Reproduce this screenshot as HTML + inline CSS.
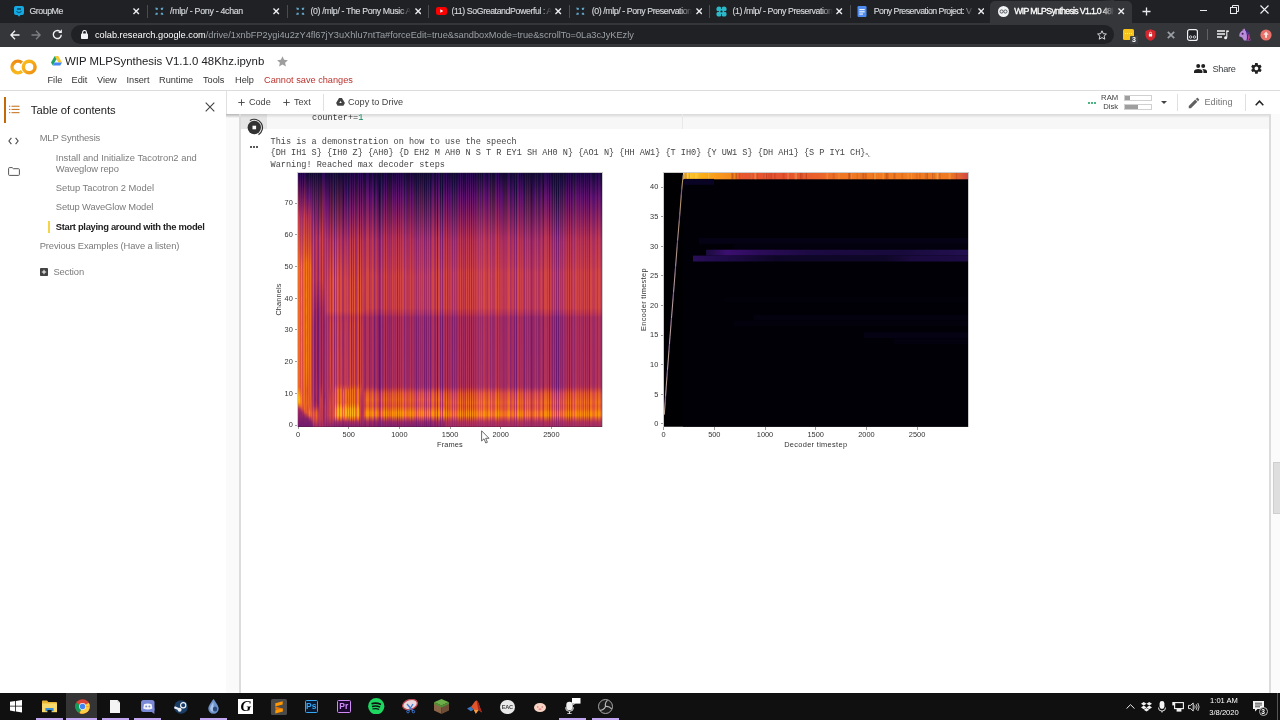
<!DOCTYPE html>
<html><head><meta charset="utf-8"><title>WIP MLPSynthesis</title>
<style>
*{box-sizing:border-box;margin:0;padding:0}
html,body{width:1280px;height:720px;overflow:hidden;background:#fff;font-family:"Liberation Sans",sans-serif;}
body{position:relative;transform:translateZ(0);will-change:transform}
.abs{position:absolute}
#tabbar{position:absolute;left:0;top:0;width:1280px;height:22.5px;background:#202124}
#toolbar{position:absolute;left:0;top:22.5px;width:1280px;height:24.2px;background:#35363a}
.ttl{top:0;height:22px;line-height:22px;font-size:9.3px;white-space:nowrap;overflow:hidden}
#omni{position:absolute;left:71px;top:25px;width:1043px;height:19px;border-radius:9.5px;background:#202124}
#url{position:absolute;left:95px;top:22.5px;height:24px;line-height:24px;font-size:9.235px;color:#9aa0a6;white-space:nowrap}
#url b{color:#fff;font-weight:normal}
#taskbar{position:absolute;left:0;top:693px;width:1280px;height:27px;background:#101010}
.mono{font-family:"Liberation Mono",monospace}
.menu{top:72.5px;height:14px;line-height:14px;font-size:9.2px;color:#333;white-space:nowrap}
.toc{height:14px;line-height:14px;font-size:9.4px;white-space:nowrap}
.tb{top:95px;height:14px;line-height:14px;font-size:9.1px;color:#424242;white-space:nowrap}
.out{height:11.5px;line-height:11.5px;font-size:8.55px;color:#454545;white-space:pre}
.tick{height:9px;line-height:9px;font-size:7.4px;color:#333;white-space:nowrap}
</style></head><body>
<div id="tabbar"></div><div id="toolbar"></div>
<div class="abs" style="left:990px;top:1px;width:142px;height:22px;background:#35363a;border-radius:5px 5px 0 0"></div>
<div class="abs ttl" style="left:29.4px;width:100px;color:#d4d7db;font-weight:normal;font-size:8.8px;letter-spacing:-0.455px;-webkit-text-stroke:0.15px #d4d7db;">GroupMe<span style="position:absolute;right:0;top:0;width:12px;height:22px;background:linear-gradient(90deg,transparent,#202124)"></span></div>
<svg class="abs" style="left:133.3px;top:8.3px" width="6.4" height="6.4" viewBox="0 0 7 7"><path d="M0.5 0.5L6.5 6.5M6.5 0.5L0.5 6.5" stroke="#eceef1" stroke-width="1.5" fill="none"/></svg>
<div class="abs" style="left:146.5px;top:5px;width:1px;height:13px;background:#4a4c50"></div>
<svg class="abs" style="left:14px;top:6px" width="10" height="11" viewBox="0 0 10 11"><rect x="0" y="0" width="10" height="9" rx="2" fill="#15a9e2"/><path d="M3.5 9L5 10.8L6.5 9Z" fill="#15a9e2"/><rect x="3" y="2" width="4" height="2" fill="#0a5f86"/><path d="M2.5 5.2Q5 8 7.5 5.2" stroke="#0a5f86" stroke-width="1.1" fill="none"/></svg>
<div class="abs ttl" style="left:170px;width:100px;color:#d4d7db;font-weight:normal;font-size:8.8px;letter-spacing:-0.287px;-webkit-text-stroke:0.15px #d4d7db;">/mlp/ - Pony - 4chan<span style="position:absolute;right:0;top:0;width:12px;height:22px;background:linear-gradient(90deg,transparent,#202124)"></span></div>
<svg class="abs" style="left:273.3px;top:8.3px" width="6.4" height="6.4" viewBox="0 0 7 7"><path d="M0.5 0.5L6.5 6.5M6.5 0.5L0.5 6.5" stroke="#eceef1" stroke-width="1.5" fill="none"/></svg>
<div class="abs" style="left:286.5px;top:5px;width:1px;height:13px;background:#4a4c50"></div>
<svg class="abs" style="left:155.3px;top:7.2px" width="8.6" height="8.6" viewBox="0 0 10 10"><g fill="#5fa8cc"><path d="M0.300 0.600L3.400 1.200L3 3.400L0.900 3.200Z"/><path d="M9.700 0.600L6.600 1.200L7 3.400L9.100 3.200Z"/><path d="M0.300 9.400L3.400 8.800L3 6.600L0.900 6.800Z"/><path d="M9.700 9.400L6.600 8.800L7 6.600L9.100 6.800Z"/></g></svg>
<div class="abs ttl" style="left:310.5px;width:100px;color:#d4d7db;font-weight:normal;font-size:8.8px;letter-spacing:-0.366px;-webkit-text-stroke:0.15px #d4d7db;">(0) /mlp/ - The Pony Music A<span style="position:absolute;right:0;top:0;width:12px;height:22px;background:linear-gradient(90deg,transparent,#202124)"></span></div>
<svg class="abs" style="left:414.8px;top:8.3px" width="6.4" height="6.4" viewBox="0 0 7 7"><path d="M0.5 0.5L6.5 6.5M6.5 0.5L0.5 6.5" stroke="#eceef1" stroke-width="1.5" fill="none"/></svg>
<div class="abs" style="left:428.0px;top:5px;width:1px;height:13px;background:#4a4c50"></div>
<svg class="abs" style="left:296.3px;top:7.2px" width="8.6" height="8.6" viewBox="0 0 10 10"><g fill="#5fa8cc"><path d="M0.300 0.600L3.400 1.200L3 3.400L0.900 3.200Z"/><path d="M9.700 0.600L6.600 1.200L7 3.400L9.100 3.200Z"/><path d="M0.300 9.400L3.400 8.800L3 6.600L0.900 6.800Z"/><path d="M9.700 9.400L6.600 8.800L7 6.600L9.100 6.800Z"/></g></svg>
<div class="abs ttl" style="left:451.5px;width:100px;color:#d4d7db;font-weight:normal;font-size:8.8px;letter-spacing:-0.421px;-webkit-text-stroke:0.15px #d4d7db;">(11) SoGreatandPowerful : A<span style="position:absolute;right:0;top:0;width:12px;height:22px;background:linear-gradient(90deg,transparent,#202124)"></span></div>
<svg class="abs" style="left:555.3px;top:8.3px" width="6.4" height="6.4" viewBox="0 0 7 7"><path d="M0.5 0.5L6.5 6.5M6.5 0.5L0.5 6.5" stroke="#eceef1" stroke-width="1.5" fill="none"/></svg>
<div class="abs" style="left:568.5px;top:5px;width:1px;height:13px;background:#4a4c50"></div>
<svg class="abs" style="left:435.5px;top:7px" width="11" height="8" viewBox="0 0 11 8"><rect width="11" height="8" rx="2.2" fill="#f00"/><path d="M4.3 2.2L7.3 4L4.3 5.8Z" fill="#fff"/></svg>
<div class="abs ttl" style="left:591.7px;width:100px;color:#d4d7db;font-weight:normal;font-size:8.8px;letter-spacing:-0.414px;-webkit-text-stroke:0.15px #d4d7db;">(0) /mlp/ - Pony Preservation<span style="position:absolute;right:0;top:0;width:12px;height:22px;background:linear-gradient(90deg,transparent,#202124)"></span></div>
<svg class="abs" style="left:696.0px;top:8.3px" width="6.4" height="6.4" viewBox="0 0 7 7"><path d="M0.5 0.5L6.5 6.5M6.5 0.5L0.5 6.5" stroke="#eceef1" stroke-width="1.5" fill="none"/></svg>
<div class="abs" style="left:709.2px;top:5px;width:1px;height:13px;background:#4a4c50"></div>
<svg class="abs" style="left:576.3px;top:7.2px" width="8.6" height="8.6" viewBox="0 0 10 10"><g fill="#5fa8cc"><path d="M0.300 0.600L3.400 1.200L3 3.400L0.900 3.200Z"/><path d="M9.700 0.600L6.600 1.200L7 3.400L9.100 3.200Z"/><path d="M0.300 9.400L3.400 8.800L3 6.600L0.900 6.800Z"/><path d="M9.700 9.400L6.600 8.800L7 6.600L9.100 6.800Z"/></g></svg>
<div class="abs ttl" style="left:732.5px;width:100px;color:#d4d7db;font-weight:normal;font-size:8.8px;letter-spacing:-0.414px;-webkit-text-stroke:0.15px #d4d7db;">(1) /mlp/ - Pony Preservation<span style="position:absolute;right:0;top:0;width:12px;height:22px;background:linear-gradient(90deg,transparent,#202124)"></span></div>
<svg class="abs" style="left:836.3px;top:8.3px" width="6.4" height="6.4" viewBox="0 0 7 7"><path d="M0.5 0.5L6.5 6.5M6.5 0.5L0.5 6.5" stroke="#eceef1" stroke-width="1.5" fill="none"/></svg>
<div class="abs" style="left:849.5px;top:5px;width:1px;height:13px;background:#4a4c50"></div>
<svg class="abs" style="left:716px;top:5.5px" width="11" height="11" viewBox="0 0 11 11"><g fill="#2bb8c8"><ellipse cx="3" cy="3" rx="2.6" ry="2.6"/><ellipse cx="8" cy="3" rx="2.6" ry="2.6"/><ellipse cx="3" cy="8" rx="2.6" ry="2.6"/><ellipse cx="8" cy="8" rx="2.6" ry="2.6"/><rect x="3" y="3" width="5" height="5"/></g><circle cx="5.500" cy="5.500" r="1.100" fill="#202124"/><path d="M5.500 0.600V3M5.500 8V10.400M0.600 5.500H3M8 5.500H10.400" stroke="#202124" stroke-width="0.700"/></svg>
<div class="abs ttl" style="left:873.7px;width:100px;color:#d4d7db;font-weight:normal;font-size:8.8px;letter-spacing:-0.526px;-webkit-text-stroke:0.15px #d4d7db;">Pony Preservation Project: V<span style="position:absolute;right:0;top:0;width:12px;height:22px;background:linear-gradient(90deg,transparent,#202124)"></span></div>
<svg class="abs" style="left:977.8px;top:8.3px" width="6.4" height="6.4" viewBox="0 0 7 7"><path d="M0.5 0.5L6.5 6.5M6.5 0.5L0.5 6.5" stroke="#eceef1" stroke-width="1.5" fill="none"/></svg>
<svg class="abs" style="left:857px;top:5.5px" width="10" height="11" viewBox="0 0 10 11"><rect x="0.5" width="9" height="11" rx="1.2" fill="#4f8df0"/><rect x="2.3" y="3.1" width="5.4" height="1.1" fill="#fff"/><rect x="2.3" y="5.3" width="5.4" height="1.1" fill="#fff"/><rect x="2.3" y="7.5" width="3.6" height="1.1" fill="#fff"/></svg>
<div class="abs ttl" style="left:1014.2px;width:100px;color:#ffffff;font-weight:normal;font-size:8.8px;letter-spacing:-0.703px;-webkit-text-stroke:0.3px #fff;">WIP MLPSynthesis V1.1.0 48K<span style="position:absolute;right:0;top:0;width:12px;height:22px;background:linear-gradient(90deg,transparent,#35363a)"></span></div>
<svg class="abs" style="left:1118.3px;top:8.3px" width="6.4" height="6.4" viewBox="0 0 7 7"><path d="M0.5 0.5L6.5 6.5M6.5 0.5L0.5 6.5" stroke="#eceef1" stroke-width="1.5" fill="none"/></svg>
<svg class="abs" style="left:998px;top:5.5px" width="11" height="11" viewBox="0 0 11 11"><circle cx="5.5" cy="5.5" r="5.5" fill="#f1f3f4"/><circle cx="3.6" cy="5.5" r="1.6" fill="none" stroke="#55585e" stroke-width="1"/><circle cx="7.4" cy="5.5" r="1.6" fill="none" stroke="#55585e" stroke-width="1"/></svg>
<svg class="abs" style="left:1142px;top:7px" width="9" height="9" viewBox="0 0 9 9"><path d="M4.5 0.5V8.5M0.5 4.5H8.5" stroke="#e8eaed" stroke-width="1.3"/></svg>
<div class="abs" style="left:1200px;top:10px;width:7px;height:1px;background:#e8eaed"></div>
<svg class="abs" style="left:1230px;top:5px" width="9" height="9" viewBox="0 0 9 9"><rect x="0.5" y="2.5" width="6" height="6" fill="none" stroke="#e8eaed" stroke-width="1"/><path d="M2.5 2.5V0.5H8.5V6.5H6.5" fill="none" stroke="#e8eaed" stroke-width="1"/></svg>
<svg class="abs" style="left:1260px;top:5px" width="9" height="9" viewBox="0 0 9 9"><path d="M0.5 0.5L8.5 8.5M8.5 0.5L0.5 8.5" stroke="#f1f3f4" stroke-width="1.1"/></svg>
<svg class="abs" style="left:10px;top:30px" width="10" height="10" viewBox="0 0 10 10"><path d="M9.5 5H1.2M5 0.8L0.9 5L5 9.2" stroke="#f1f3f4" stroke-width="1.3" fill="none"/></svg>
<svg class="abs" style="left:31px;top:30px" width="10" height="10" viewBox="0 0 10 10"><path d="M0.5 5H8.8M5 0.8L9.1 5L5 9.2" stroke="#7c7f84" stroke-width="1.3" fill="none"/></svg>
<svg class="abs" style="left:52px;top:29px" width="11" height="11" viewBox="0 0 11 11"><path d="M9.3 5.8A4 4 0 1 1 8 2.6" stroke="#f1f3f4" stroke-width="1.4" fill="none"/><path d="M6.2 3.9H9.9V0.3Z" fill="#f1f3f4"/></svg>
<div id="omni"></div>
<svg class="abs" style="left:81px;top:30px" width="7" height="9" viewBox="0 0 7 9"><rect x="0" y="3.6" width="7" height="5.4" rx="0.8" fill="#f1f3f4"/><path d="M1.6 4V2.4A1.9 1.9 0 0 1 5.4 2.4V4" stroke="#f1f3f4" stroke-width="1.1" fill="none"/></svg>
<div id="url"><b>colab.research.google.com</b>/drive/1xnbFP2ygi4u2zY4fl67jY3uXhlu7ntTa#forceEdit=true&amp;sandboxMode=true&amp;scrollTo=0La3cJyKEzly</div>
<svg class="abs" style="left:1097px;top:29.5px" width="10" height="10" viewBox="0 0 10 10"><path d="M5 0.8L6.3 3.7L9.4 4L7.1 6.1L7.8 9.2L5 7.6L2.2 9.2L2.9 6.1L0.6 4L3.7 3.7Z" fill="none" stroke="#e8eaed" stroke-width="0.9"/></svg>
<div class="abs" style="left:1123px;top:29px;width:11px;height:11px;background:#f6c21c;border-radius:1.5px"></div>
<div class="abs" style="left:1124.8px;top:33px;width:7.5px;height:0;border-top:1.2px dotted #fdf0b8"></div>
<div class="abs" style="left:1130.2px;top:36.4px;width:7.6px;height:7.6px;background:#3f4246;border-radius:1px;color:#fff;font-size:7px;line-height:7.6px;text-align:center;font-weight:bold">3</div>
<svg class="abs" style="left:1145px;top:29px" width="11" height="12" viewBox="0 0 11 12"><path d="M5.5 0.3L10.5 2V6C10.5 9 8 11 5.5 11.8C3 11 0.5 9 0.5 6V2Z" fill="#d4282f"/><rect x="3.9" y="5" width="3.2" height="2.6" rx="0.4" fill="#fff"/><path d="M4.5 5V4.2A1 1 0 0 1 6.5 4.2V5" stroke="#fff" stroke-width="0.7" fill="none"/></svg>
<svg class="abs" style="left:1167px;top:31px" width="8" height="8" viewBox="0 0 8 8"><path d="M0.8 0.8L7.2 7.2M7.2 0.8L0.8 7.2" stroke="#9aa0a6" stroke-width="1.7"/></svg>
<svg class="abs" style="left:1186.5px;top:29px" width="11" height="12" viewBox="0 0 11 12"><rect x="0.6" y="0.6" width="9.8" height="10.8" rx="2" fill="#202124" stroke="#f1f3f4" stroke-width="1.2"/><circle cx="3.6" cy="8" r="1.2" fill="none" stroke="#f1f3f4" stroke-width="0.8"/><circle cx="7.4" cy="8" r="1.2" fill="none" stroke="#f1f3f4" stroke-width="0.8"/></svg>
<div class="abs" style="left:1207px;top:29px;width:1px;height:11px;background:#5f6368"></div>
<svg class="abs" style="left:1217px;top:30px" width="12" height="10" viewBox="0 0 12 10"><path d="M0 1H8M0 4H8M0 7H5" stroke="#f1f3f4" stroke-width="1.3"/><path d="M9.8 0.5V7.5" stroke="#f1f3f4" stroke-width="1.1"/><circle cx="8.6" cy="7.8" r="1.5" fill="#f1f3f4"/><path d="M9.8 0.5H11.8V2H9.8Z" fill="#f1f3f4"/></svg>
<svg class="abs" style="left:1238px;top:28px" width="13" height="13" viewBox="0 0 13 13"><path d="M6.2 0.3L7.4 2.6C10 3 11.8 5.4 11.6 8.6L12.6 12.4H6L4.2 9.6L1.2 8.2L1.6 5.4C2.6 3.6 4 2.8 5.2 2.6Z" fill="#b98ddb"/><path d="M7 1.2C10.500 2 12 5.500 11.400 9.500L12.600 12.600H8.400C9.600 9.500 9 5 7 1.200Z" fill="#3b2a78"/><path d="M8.600 3.400C10.300 5.500 10.500 9 9.600 12.500H10.600C11.300 9 10.800 5.600 8.600 3.400Z" fill="#e0489c"/><path d="M4.200 2.200L5.400 0.600L5.800 3Z" fill="#b98ddb"/><circle cx="4.600" cy="5.800" r="1" fill="#3b1d5e"/></svg>
<svg class="abs" style="left:1260px;top:29px" width="12" height="12" viewBox="0 0 12 12"><circle cx="6" cy="6" r="5.6" fill="#e8716a"/><path d="M6 2.6L8.6 5.8H7V8.8H5V5.8H3.4Z" fill="#fbe3e0"/></svg>
<svg class="abs" style="left:10px;top:59px" width="28" height="16" viewBox="0 0 28 16">
<defs><linearGradient id="cog" x1="0" y1="0" x2="0" y2="1"><stop offset="0" stop-color="#ee8d12"/><stop offset="0.45" stop-color="#f3a116"/><stop offset="1" stop-color="#f8b81c"/></linearGradient>
<linearGradient id="oog" x1="0" y1="0" x2="1" y2="1"><stop offset="0" stop-color="#f9bd1e"/><stop offset="0.5" stop-color="#f5a818"/><stop offset="1" stop-color="#ee8f12"/></linearGradient></defs>
<path d="M11.900 3.700A5.850 5.850 0 1 0 11.900 12.300" fill="none" stroke="url(#cog)" stroke-width="3.500"/>
<circle cx="19.200" cy="8" r="5.850" fill="none" stroke="url(#oog)" stroke-width="3.500"/>
</svg>
<svg class="abs" style="left:50.5px;top:56px" width="11" height="10" viewBox="0 0 11 10">
<path d="M3.7 0H7.3L11 6.4H7.4Z" fill="#f9c835"/><path d="M3.7 0L0 6.4L1.8 9.6L5.5 3.2Z" fill="#1fa463"/><path d="M3.6 6.4H11L9.2 9.6H1.8Z" fill="#4688f4"/></svg>
<div class="abs" id="nbtitle" style="left:65px;top:52px;height:18px;line-height:18px;font-size:11.4px;color:#202124;white-space:nowrap">WIP MLPSynthesis V1.1.0 48Khz.ipynb</div>
<svg class="abs" style="left:276.5px;top:55.5px" width="11" height="11" viewBox="0 0 11 11"><path d="M5.5 0.3L7.1 3.8L10.9 4.2L8.1 6.8L8.9 10.6L5.5 8.6L2.1 10.6L2.9 6.8L0.1 4.2L3.9 3.8Z" fill="#9e9e9e"/></svg>
<div class="abs menu" style="left:47.5px">File</div>
<div class="abs menu" style="left:71.5px">Edit</div>
<div class="abs menu" style="left:97px">View</div>
<div class="abs menu" style="left:126.5px">Insert</div>
<div class="abs menu" style="left:159px">Runtime</div>
<div class="abs menu" style="left:203px">Tools</div>
<div class="abs menu" style="left:235px">Help</div>
<div class="abs menu" style="left:264px;color:#b9322d">Cannot save changes</div>
<svg class="abs" style="left:1193.5px;top:64px" width="13" height="9" viewBox="0 0 13 9"><circle cx="4.2" cy="2.1" r="2" fill="#212121"/><circle cx="9.2" cy="2.1" r="2" fill="#212121"/><path d="M0 9V7.2C0 5.6 2.6 4.9 4.2 4.9S8.4 5.6 8.4 7.2V9Z" fill="#212121"/><path d="M9.4 9V7.2C9.4 6.2 8.9 5.5 8.2 5C10 4.8 13 5.6 13 7.2V9Z" fill="#212121"/></svg>
<div class="abs" id="share" style="left:1212.5px;top:61.5px;height:14px;line-height:14px;font-size:9.2px;letter-spacing:-0.27px;color:#3c4043">Share</div>
<svg class="abs" style="left:1249.7px;top:62.4px" width="12.8" height="12.8" viewBox="0 0 24 24"><path fill="#212121" d="M19.43 12.98c.04-.32.07-.64.07-.98s-.03-.66-.07-.98l2.11-1.65c.19-.15.24-.42.12-.64l-2-3.46c-.12-.22-.39-.3-.61-.22l-2.49 1c-.52-.4-1.08-.73-1.69-.98l-.38-2.65C14.46 2.18 14.25 2 14 2h-4c-.25 0-.46.18-.49.42l-.38 2.65c-.61.25-1.17.59-1.69.98l-2.49-1c-.23-.09-.49 0-.61.22l-2 3.46c-.13.22-.07.49.12.64l2.11 1.65c-.04.32-.07.65-.07.98s.03.66.07.98l-2.11 1.65c-.19.15-.24.42-.12.64l2 3.46c.12.22.39.3.61.22l2.49-1c.52.4 1.08.73 1.69.98l.38 2.65c.03.24.24.42.49.42h4c.25 0 .46-.18.49-.42l.38-2.65c.61-.25 1.17-.59 1.69-.98l2.49 1c.23.09.49 0 .61-.22l2-3.46c.12-.22.07-.49-.12-.64l-2.11-1.65zM12 15.5c-1.93 0-3.500-1.57-3.500-3.500s1.570-3.500 3.500-3.500 3.500 1.570 3.500 3.500-1.570 3.500-3.500 3.500z"/></svg>
<div class="abs" style="left:0;top:90px;width:1280px;height:1px;background:#dadce0"></div>
<div class="abs" style="left:225.5px;top:91px;width:1px;height:602px;background:#e0e0e0"></div>
<div class="abs" style="left:4px;top:97px;width:2.2px;height:26px;background:#c26a08"></div>
<svg class="abs" style="left:8.6px;top:105.2px" width="11" height="9" viewBox="0 0 11 9"><g fill="#c8782a"><rect x="0" y="0.7" width="1.3" height="1.1"/><rect x="0" y="3.9" width="1.3" height="1.1"/><rect x="0" y="7.100" width="1.300" height="1.100"/><rect x="2.500" y="0.700" width="8" height="1.100"/><rect x="2.500" y="3.900" width="8" height="1.100"/><rect x="2.500" y="7.100" width="8" height="1.100"/></g></svg>
<svg class="abs" style="left:8.4px;top:136.6px" width="11" height="8" viewBox="0 0 11 8"><path d="M3.400 0.800L0.900 4L3.400 7.200M7.600 0.800L10.100 4L7.600 7.200" fill="none" stroke="#4a4a4a" stroke-width="1.100"/></svg>
<svg class="abs" style="left:8px;top:167px" width="12" height="9" viewBox="0 0 12 9"><path d="M0.600 1.500Q0.600 0.600 1.500 0.600H4.200L5.300 1.700H10.500Q11.400 1.700 11.400 2.600V7.500Q11.400 8.400 10.500 8.400H1.500Q0.600 8.400 0.600 7.500Z" fill="none" stroke="#555" stroke-width="1"/></svg>
<div class="abs" id="toctitle" style="left:30.8px;top:101.7px;height:16px;line-height:16px;font-size:11.24px;color:#212121;white-space:nowrap">Table of contents</div>
<svg class="abs" style="left:205px;top:101.5px" width="10" height="10" viewBox="0 0 10 10"><path d="M0.7 0.7L9.3 9.3M9.3 0.7L0.7 9.3" stroke="#424242" stroke-width="1.1"/></svg>
<div class="abs toc" style="left:39.7px;top:131px;color:#7b7b7b;letter-spacing:-0.148px">MLP Synthesis</div>
<div class="abs toc" style="left:55.8px;top:150.5px;color:#7b7b7b;letter-spacing:-0.001px">Install and Initialize Tacotron2 and</div>
<div class="abs toc" style="left:55.8px;top:161.7px;color:#7b7b7b;letter-spacing:-0.095px">Waveglow repo</div>
<div class="abs toc" style="left:55.8px;top:181px;color:#7b7b7b;letter-spacing:-0.032px">Setup Tacotron 2 Model</div>
<div class="abs toc" style="left:55.8px;top:200.3px;color:#7b7b7b;letter-spacing:-0.144px">Setup WaveGlow Model</div>
<div class="abs toc" style="left:55.8px;top:219.7px;color:#212121;font-weight:bold;letter-spacing:-0.303px">Start playing around with the model</div>
<div class="abs toc" style="left:39.7px;top:239px;color:#7b7b7b;letter-spacing:-0.111px">Previous Examples (Have a listen)</div>
<div class="abs toc" style="left:53.4px;top:264.5px;color:#7b7b7b;letter-spacing:-0.079px">Section</div>
<div class="abs" style="left:47.7px;top:221px;width:2.3px;height:11.5px;background:#f5d547"></div>
<svg class="abs" style="left:39.5px;top:267.5px" width="8" height="8" viewBox="0 0 8 8"><rect width="8" height="8" rx="0.8" fill="#424242"/><path d="M4 1.8V6.2M1.8 4H6.2" stroke="#fff" stroke-width="1"/></svg>
<div class="abs" style="left:226px;top:114px;width:14px;height:579px;background:#fafafa"></div>
<div class="abs" style="left:226px;top:113.5px;width:1054px;height:4px;background:linear-gradient(180deg,rgba(0,0,0,0.16),rgba(0,0,0,0))"></div>
<svg class="abs" style="left:238px;top:98.5px" width="7" height="7" viewBox="0 0 7 7"><path d="M3.5 0.3V6.7M0.3 3.5H6.7" stroke="#424242" stroke-width="0.9"/></svg>
<div class="abs tb" style="left:249px">Code</div>
<svg class="abs" style="left:283px;top:98.5px" width="7" height="7" viewBox="0 0 7 7"><path d="M3.5 0.3V6.7M0.3 3.5H6.7" stroke="#424242" stroke-width="0.9"/></svg>
<div class="abs tb" style="left:294px">Text</div>
<div class="abs" style="left:323px;top:94px;width:1px;height:17px;background:#e0e0e0"></div>
<svg class="abs" style="left:335.5px;top:98px" width="9" height="8" viewBox="0 0 11 10"><path d="M3.7 0H7.3L11 6.4L9.2 9.6H1.8L0 6.4Z" fill="#424242"/><path d="M5.5 3.6L3.9 6.4H7.1Z" fill="#fff"/></svg>
<div class="abs tb" style="left:348px">Copy to Drive</div>
<div class="abs" style="left:1088.0px;top:101.5px;width:2px;height:2px;border-radius:1px;background:#0f9d58"></div>
<div class="abs" style="left:1091.1px;top:101.5px;width:2px;height:2px;border-radius:1px;background:#0f9d58"></div>
<div class="abs" style="left:1094.2px;top:101.5px;width:2px;height:2px;border-radius:1px;background:#0f9d58"></div>
<div class="abs" style="left:1098px;top:93.4px;width:20.2px;text-align:right;height:9px;line-height:9px;font-size:7.7px;color:#424242">RAM</div>
<div class="abs" style="left:1098px;top:102.3px;width:20.2px;text-align:right;height:9px;line-height:9px;font-size:7.7px;color:#424242">Disk</div>
<div class="abs" style="left:1123.5px;top:95px;width:28px;height:5.6px;border:1px solid #d0d0d0;background:#fff"><div style="width:5px;height:100%;background:#9e9e9e"></div></div>
<div class="abs" style="left:1123.5px;top:104px;width:28px;height:5.6px;border:1px solid #d0d0d0;background:#fff"><div style="width:13px;height:100%;background:#9e9e9e"></div></div>
<svg class="abs" style="left:1160.5px;top:101px" width="6" height="3" viewBox="0 0 6 3"><path d="M0 0H6L3 3Z" fill="#424242"/></svg>
<div class="abs" style="left:1176.5px;top:94px;width:1px;height:17px;background:#e0e0e0"></div>
<svg class="abs" style="left:1187.2px;top:95.8px" width="14" height="14" viewBox="0 0 24 24"><path fill="#616161" d="M3 17.25V21h3.750L17.81 9.94l-3.750-3.750L3 17.25zM20.710 7.040c.39-.39.39-1.020 0-1.410l-2.340-2.340c-.39-.39-1.020-.39-1.410 0l-1.830 1.830 3.750 3.750 1.830-1.830z"/></svg>
<div class="abs tb" id="editing" style="left:1204.5px;color:#757575;font-size:9.16px">Editing</div>
<div class="abs" style="left:1244.5px;top:94px;width:1px;height:17px;background:#e0e0e0"></div>
<svg class="abs" style="left:1254.5px;top:99.5px" width="9" height="6" viewBox="0 0 9 6"><path d="M0.7 5.2L4.5 1.2L8.3 5.2" fill="none" stroke="#212121" stroke-width="1.5"/></svg>
<div class="abs" style="left:240px;top:114px;width:1029px;height:15px;background:#f7f7f7"></div>
<div class="abs" style="left:240px;top:114px;width:27px;height:15px;background:#e6e6e6"></div>
<div class="abs" style="left:226px;top:113.5px;width:1054px;height:4px;background:linear-gradient(180deg,rgba(0,0,0,0.13),rgba(0,0,0,0))"></div>
<div class="abs" style="left:239.4px;top:114px;width:1.7px;height:579px;background:#dcdcdc"></div>
<div class="abs" style="left:682px;top:114px;width:1px;height:15px;background:#e8e8e8"></div>
<div class="abs" style="left:1269.2px;top:114px;width:1.8px;height:579px;background:#dcdcdc"></div>
<div class="abs" style="left:1271px;top:114px;width:9px;height:579px;background:#fbfbfb"></div>
<div class="abs" style="left:1272.5px;top:461.5px;width:7.5px;height:52.5px;background:#dedede;border:1px solid #cfcfcf;border-right:0"></div>
<div class="abs mono" style="left:312px;top:112.8px;height:11px;line-height:11px;font-size:8.55px;color:#333;white-space:pre;clip-path:inset(1.4px 0 0 0)">counter+=<span style="color:#09885a">1</span></div>
<svg class="abs" style="left:245px;top:118px" width="19" height="19" viewBox="0 0 19 19"><circle cx="9.3" cy="9.5" r="6.7" fill="#333"/><rect x="7.5" y="7.7" width="3.6" height="3.6" fill="#fff"/><path d="M4.900 2.460A8.300 8.300 0 0 1 13.450 16.690" fill="none" stroke="#333" stroke-width="1.200"/></svg>
<div class="abs" style="left:249.7px;top:145.8px;width:2.1px;height:2.1px;border-radius:1.1px;background:#212121"></div>
<div class="abs" style="left:252.79999999999998px;top:145.8px;width:2.1px;height:2.1px;border-radius:1.1px;background:#212121"></div>
<div class="abs" style="left:255.89999999999998px;top:145.8px;width:2.1px;height:2.1px;border-radius:1.1px;background:#212121"></div>
<div class="abs mono out" style="left:270.5px;top:136.7px">This is a demonstration on how to use the speech</div>
<div class="abs mono out" style="left:270.5px;top:148.2px">{DH IH1 S} {IH0 Z} {AH0} {D EH2 M AH0 N S T R EY1 SH AH0 N} {AO1 N} {HH AW1} {T IH0} {Y UW1 S} {DH AH1} {S P IY1 CH}<span style="font-size:4.4px;letter-spacing:0;position:relative;top:0.3px">N<span style="position:relative;top:1.3px">L</span></span></div>
<div class="abs mono out" style="left:270.5px;top:159.7px">Warning! Reached max decoder steps</div>
<svg class="abs" style="left:298px;top:173px" width="304" height="253.6" viewBox="0 0 304 80" preserveAspectRatio="none" shape-rendering="crispEdges"><defs><linearGradient id="g0" x2="0" y2="1"><stop offset="0.006" stop-color="#2d0a57"/><stop offset="0.169" stop-color="#c63d4d"/><stop offset="0.381" stop-color="#ee6d22"/><stop offset="0.844" stop-color="#ee6c23"/><stop offset="0.881" stop-color="#fbaf14"/><stop offset="0.894" stop-color="#fbb51a"/><stop offset="0.906" stop-color="#fb9e0a"/><stop offset="0.931" stop-color="#a52d60"/><stop offset="0.994" stop-color="#771c6d"/></linearGradient><linearGradient id="g1" x2="0" y2="1"><stop offset="0.006" stop-color="#130a33"/><stop offset="0.106" stop-color="#711a6d"/><stop offset="0.181" stop-color="#bd3853"/><stop offset="0.381" stop-color="#ef6e21"/><stop offset="0.806" stop-color="#ee6c22"/><stop offset="0.844" stop-color="#eb6627"/><stop offset="0.869" stop-color="#f98f09"/><stop offset="0.881" stop-color="#fca70c"/><stop offset="0.894" stop-color="#fbb217"/><stop offset="0.906" stop-color="#fca30a"/><stop offset="0.919" stop-color="#e9622b"/><stop offset="0.931" stop-color="#a82e5f"/><stop offset="0.944" stop-color="#8d2468"/><stop offset="0.994" stop-color="#741a6d"/></linearGradient><linearGradient id="g2" x2="0" y2="1"><stop offset="0.006" stop-color="#2d0a57"/><stop offset="0.156" stop-color="#9c2964"/><stop offset="0.381" stop-color="#da4e3d"/><stop offset="0.844" stop-color="#dc503b"/><stop offset="0.894" stop-color="#f7880e"/><stop offset="0.906" stop-color="#f7850f"/><stop offset="0.919" stop-color="#eb6628"/><stop offset="0.931" stop-color="#b73557"/><stop offset="0.944" stop-color="#932667"/><stop offset="0.994" stop-color="#751b6d"/></linearGradient><linearGradient id="g3" x2="0" y2="1"><stop offset="0.006" stop-color="#130a33"/><stop offset="0.044" stop-color="#240a4d"/><stop offset="0.181" stop-color="#b63457"/><stop offset="0.319" stop-color="#e25834"/><stop offset="0.369" stop-color="#f47b17"/><stop offset="0.406" stop-color="#f2751b"/><stop offset="0.431" stop-color="#f58112"/><stop offset="0.469" stop-color="#f3771a"/><stop offset="0.494" stop-color="#f68212"/><stop offset="0.531" stop-color="#f3771a"/><stop offset="0.556" stop-color="#f68212"/><stop offset="0.594" stop-color="#f3771a"/><stop offset="0.619" stop-color="#f68212"/><stop offset="0.656" stop-color="#f3771a"/><stop offset="0.681" stop-color="#f68212"/><stop offset="0.719" stop-color="#f3771a"/><stop offset="0.756" stop-color="#f47d15"/><stop offset="0.856" stop-color="#f1741d"/><stop offset="0.894" stop-color="#f88b0b"/><stop offset="0.906" stop-color="#f7870e"/><stop offset="0.919" stop-color="#ef6e21"/><stop offset="0.944" stop-color="#942667"/><stop offset="0.981" stop-color="#751b6d"/><stop offset="0.994" stop-color="#731a6d"/></linearGradient><linearGradient id="g4" x2="0" y2="1"><stop offset="0.006" stop-color="#2d0a57"/><stop offset="0.144" stop-color="#922667"/><stop offset="0.381" stop-color="#d74b3f"/><stop offset="0.844" stop-color="#d74b40"/><stop offset="0.919" stop-color="#e25734"/><stop offset="0.931" stop-color="#d24743"/><stop offset="0.944" stop-color="#a72e5f"/><stop offset="0.969" stop-color="#811f6b"/><stop offset="0.994" stop-color="#751b6d"/></linearGradient><linearGradient id="g5" x2="0" y2="1"><stop offset="0.006" stop-color="#130a33"/><stop offset="0.044" stop-color="#240a4d"/><stop offset="0.181" stop-color="#b63457"/><stop offset="0.381" stop-color="#ef6e21"/><stop offset="0.806" stop-color="#ee6c22"/><stop offset="0.856" stop-color="#e8602d"/><stop offset="0.906" stop-color="#eb6627"/><stop offset="0.931" stop-color="#d24743"/><stop offset="0.956" stop-color="#892269"/><stop offset="0.981" stop-color="#751b6d"/><stop offset="0.994" stop-color="#731a6d"/></linearGradient><linearGradient id="g6" x2="0" y2="1"><stop offset="0.006" stop-color="#2e0a58"/><stop offset="0.169" stop-color="#c63e4d"/><stop offset="0.369" stop-color="#ef6f20"/><stop offset="0.894" stop-color="#ef7020"/><stop offset="0.931" stop-color="#ed6a24"/><stop offset="0.944" stop-color="#d74c3f"/><stop offset="0.956" stop-color="#a12b62"/><stop offset="0.969" stop-color="#84206a"/><stop offset="0.994" stop-color="#751b6d"/></linearGradient><linearGradient id="g7" x2="0" y2="1"><stop offset="0.006" stop-color="#250a4e"/><stop offset="0.156" stop-color="#932667"/><stop offset="0.319" stop-color="#c73e4c"/><stop offset="0.356" stop-color="#da4e3d"/><stop offset="0.431" stop-color="#d94d3e"/><stop offset="0.481" stop-color="#de5339"/><stop offset="0.519" stop-color="#d94e3d"/><stop offset="0.544" stop-color="#de5338"/><stop offset="0.581" stop-color="#d94e3d"/><stop offset="0.606" stop-color="#de5338"/><stop offset="0.644" stop-color="#d94e3d"/><stop offset="0.781" stop-color="#de5239"/><stop offset="0.856" stop-color="#d24743"/><stop offset="0.931" stop-color="#e15635"/><stop offset="0.944" stop-color="#dc503b"/><stop offset="0.956" stop-color="#aa2f5e"/><stop offset="0.969" stop-color="#83206b"/><stop offset="0.994" stop-color="#741b6d"/></linearGradient><linearGradient id="g8" x2="0" y2="1"><stop offset="0.006" stop-color="#130a33"/><stop offset="0.106" stop-color="#711a6d"/><stop offset="0.181" stop-color="#bd3853"/><stop offset="0.319" stop-color="#e65d2f"/><stop offset="0.356" stop-color="#f47a17"/><stop offset="0.394" stop-color="#f37819"/><stop offset="0.419" stop-color="#f68212"/><stop offset="0.444" stop-color="#f2761b"/><stop offset="0.481" stop-color="#f68311"/><stop offset="0.506" stop-color="#f2761b"/><stop offset="0.544" stop-color="#f68311"/><stop offset="0.569" stop-color="#f2761b"/><stop offset="0.606" stop-color="#f68311"/><stop offset="0.631" stop-color="#f2761b"/><stop offset="0.669" stop-color="#f68311"/><stop offset="0.694" stop-color="#f2761b"/><stop offset="0.731" stop-color="#f68410"/><stop offset="0.831" stop-color="#f2761b"/><stop offset="0.856" stop-color="#eb6429"/><stop offset="0.906" stop-color="#ed6925"/><stop offset="0.944" stop-color="#e25834"/><stop offset="0.969" stop-color="#83206b"/><stop offset="0.994" stop-color="#741a6d"/></linearGradient><linearGradient id="g9" x2="0" y2="1"><stop offset="0.006" stop-color="#130a33"/><stop offset="0.194" stop-color="#9b2964"/><stop offset="0.306" stop-color="#bf3952"/><stop offset="0.356" stop-color="#d94d3e"/><stop offset="0.781" stop-color="#de5239"/><stop offset="0.856" stop-color="#ce4347"/><stop offset="0.906" stop-color="#da4e3d"/><stop offset="0.931" stop-color="#d54a41"/><stop offset="0.944" stop-color="#dc503b"/><stop offset="0.956" stop-color="#c03a51"/><stop offset="0.969" stop-color="#85216a"/><stop offset="0.994" stop-color="#731a6d"/></linearGradient><linearGradient id="g10" x2="0" y2="1"><stop offset="0.006" stop-color="#130a33"/><stop offset="0.094" stop-color="#5e136e"/><stop offset="0.169" stop-color="#b1325a"/><stop offset="0.356" stop-color="#ed6b24"/><stop offset="0.744" stop-color="#f0721e"/><stop offset="0.856" stop-color="#e8602c"/><stop offset="0.906" stop-color="#ec6826"/><stop offset="0.931" stop-color="#e45a32"/><stop offset="0.944" stop-color="#e9612c"/><stop offset="0.956" stop-color="#d64b40"/><stop offset="0.969" stop-color="#912568"/><stop offset="0.981" stop-color="#781c6d"/><stop offset="0.994" stop-color="#741a6d"/></linearGradient><linearGradient id="g11" x2="0" y2="1"><stop offset="0.006" stop-color="#2e0a58"/><stop offset="0.144" stop-color="#952766"/><stop offset="0.369" stop-color="#d84d3e"/><stop offset="0.881" stop-color="#da4e3d"/><stop offset="0.919" stop-color="#e05536"/><stop offset="0.944" stop-color="#f57e15"/><stop offset="0.956" stop-color="#f1731d"/><stop offset="0.969" stop-color="#b0325a"/><stop offset="0.981" stop-color="#7f1e6c"/><stop offset="0.994" stop-color="#761b6d"/></linearGradient><linearGradient id="g12" x2="0" y2="1"><stop offset="0.006" stop-color="#130a33"/><stop offset="0.094" stop-color="#5e136e"/><stop offset="0.181" stop-color="#b73557"/><stop offset="0.331" stop-color="#e55d30"/><stop offset="0.369" stop-color="#f0721e"/><stop offset="0.769" stop-color="#ee6d22"/><stop offset="0.881" stop-color="#ea632a"/><stop offset="0.931" stop-color="#e25834"/><stop offset="0.944" stop-color="#e9622b"/><stop offset="0.956" stop-color="#e45b31"/><stop offset="0.969" stop-color="#ae315c"/><stop offset="0.981" stop-color="#821f6b"/><stop offset="0.994" stop-color="#761b6d"/></linearGradient><linearGradient id="g13" x2="0" y2="1"><stop offset="0.006" stop-color="#260a50"/><stop offset="0.156" stop-color="#912568"/><stop offset="0.381" stop-color="#d14645"/><stop offset="0.719" stop-color="#c83f4b"/><stop offset="0.881" stop-color="#ce4347"/><stop offset="0.931" stop-color="#dc503b"/><stop offset="0.944" stop-color="#e8612c"/><stop offset="0.956" stop-color="#ea632a"/><stop offset="0.981" stop-color="#922667"/><stop offset="0.994" stop-color="#7b1d6c"/></linearGradient><linearGradient id="g14" x2="0" y2="1"><stop offset="0.006" stop-color="#130a33"/><stop offset="0.169" stop-color="#7b1d6c"/><stop offset="0.294" stop-color="#a82e5f"/><stop offset="0.431" stop-color="#bc3754"/><stop offset="0.619" stop-color="#a62d60"/><stop offset="0.856" stop-color="#a92e5f"/><stop offset="0.919" stop-color="#b63457"/><stop offset="0.944" stop-color="#d04545"/><stop offset="0.956" stop-color="#d34743"/><stop offset="0.969" stop-color="#c33c4f"/><stop offset="0.994" stop-color="#82206b"/></linearGradient><linearGradient id="g15" x2="0" y2="1"><stop offset="0.006" stop-color="#2c0a57"/><stop offset="0.219" stop-color="#c83f4c"/><stop offset="0.281" stop-color="#d54941"/><stop offset="0.431" stop-color="#de5239"/><stop offset="0.594" stop-color="#c13a51"/><stop offset="0.906" stop-color="#c33c4f"/><stop offset="0.919" stop-color="#cb4149"/><stop offset="0.944" stop-color="#e9612b"/><stop offset="0.956" stop-color="#ea632a"/><stop offset="0.969" stop-color="#e15734"/><stop offset="0.994" stop-color="#b2325a"/></linearGradient><linearGradient id="g16" x2="0" y2="1"><stop offset="0.006" stop-color="#130a33"/><stop offset="0.269" stop-color="#902568"/><stop offset="0.419" stop-color="#9b2964"/><stop offset="0.606" stop-color="#7c1d6c"/><stop offset="0.906" stop-color="#892269"/><stop offset="0.919" stop-color="#992865"/><stop offset="0.944" stop-color="#d34842"/><stop offset="0.956" stop-color="#d84d3e"/><stop offset="0.969" stop-color="#d04545"/><stop offset="0.994" stop-color="#9e2a63"/></linearGradient><linearGradient id="g17" x2="0" y2="1"><stop offset="0.006" stop-color="#2c0a57"/><stop offset="0.119" stop-color="#781c6d"/><stop offset="0.269" stop-color="#a72e5f"/><stop offset="0.419" stop-color="#ad305c"/><stop offset="0.544" stop-color="#821f6b"/><stop offset="0.794" stop-color="#82206b"/><stop offset="0.856" stop-color="#8f2468"/><stop offset="0.894" stop-color="#83206b"/><stop offset="0.919" stop-color="#972865"/><stop offset="0.944" stop-color="#d44941"/><stop offset="0.956" stop-color="#da4e3d"/><stop offset="0.969" stop-color="#d24744"/><stop offset="0.994" stop-color="#a52d60"/></linearGradient><linearGradient id="g18" x2="0" y2="1"><stop offset="0.006" stop-color="#130a33"/><stop offset="0.181" stop-color="#8b2369"/><stop offset="0.256" stop-color="#bf3952"/><stop offset="0.419" stop-color="#c73f4c"/><stop offset="0.556" stop-color="#a82e5f"/><stop offset="0.894" stop-color="#b1325a"/><stop offset="0.919" stop-color="#c13a50"/><stop offset="0.944" stop-color="#ec6925"/><stop offset="0.956" stop-color="#ee6c23"/><stop offset="0.969" stop-color="#e55c30"/><stop offset="0.994" stop-color="#b1325a"/></linearGradient><linearGradient id="g19" x2="0" y2="1"><stop offset="0.006" stop-color="#2c0a57"/><stop offset="0.119" stop-color="#771c6d"/><stop offset="0.269" stop-color="#a32c61"/><stop offset="0.419" stop-color="#a52d60"/><stop offset="0.531" stop-color="#761b6d"/><stop offset="0.781" stop-color="#751b6d"/><stop offset="0.856" stop-color="#88226a"/><stop offset="0.906" stop-color="#821f6b"/><stop offset="0.919" stop-color="#912567"/><stop offset="0.944" stop-color="#ce4347"/><stop offset="0.956" stop-color="#d34843"/><stop offset="0.969" stop-color="#cc4248"/><stop offset="0.994" stop-color="#a22c61"/></linearGradient><linearGradient id="g20" x2="0" y2="1"><stop offset="0.006" stop-color="#130a33"/><stop offset="0.269" stop-color="#8a2269"/><stop offset="0.419" stop-color="#902568"/><stop offset="0.569" stop-color="#6f196d"/><stop offset="0.844" stop-color="#791c6d"/><stop offset="0.906" stop-color="#811f6b"/><stop offset="0.919" stop-color="#8c2469"/><stop offset="0.944" stop-color="#bc3754"/><stop offset="0.969" stop-color="#bc3754"/><stop offset="0.994" stop-color="#982865"/></linearGradient><linearGradient id="g21" x2="0" y2="1"><stop offset="0.006" stop-color="#190b3d"/><stop offset="0.256" stop-color="#c63e4d"/><stop offset="0.419" stop-color="#cb4149"/><stop offset="0.544" stop-color="#a62d60"/><stop offset="0.806" stop-color="#a92f5e"/><stop offset="0.869" stop-color="#b63458"/><stop offset="0.919" stop-color="#b73557"/><stop offset="0.956" stop-color="#c63e4d"/><stop offset="0.994" stop-color="#ab305d"/></linearGradient><linearGradient id="g22" x2="0" y2="1"><stop offset="0.006" stop-color="#130a33"/><stop offset="0.256" stop-color="#c03a51"/><stop offset="0.419" stop-color="#c73e4c"/><stop offset="0.556" stop-color="#a52d60"/><stop offset="0.831" stop-color="#ad305c"/><stop offset="0.894" stop-color="#c83f4b"/><stop offset="0.969" stop-color="#c13a51"/><stop offset="0.994" stop-color="#a92f5e"/></linearGradient><linearGradient id="g23" x2="0" y2="1"><stop offset="0.006" stop-color="#130a33"/><stop offset="0.119" stop-color="#5b116e"/><stop offset="0.269" stop-color="#972766"/><stop offset="0.419" stop-color="#9c2964"/><stop offset="0.556" stop-color="#771c6d"/><stop offset="0.831" stop-color="#7f1e6c"/><stop offset="0.869" stop-color="#a02b62"/><stop offset="0.894" stop-color="#b93656"/><stop offset="0.969" stop-color="#b73557"/><stop offset="0.994" stop-color="#992865"/></linearGradient><linearGradient id="g24" x2="0" y2="1"><stop offset="0.006" stop-color="#2d0a57"/><stop offset="0.231" stop-color="#c9404a"/><stop offset="0.294" stop-color="#d14644"/><stop offset="0.419" stop-color="#d64a40"/><stop offset="0.531" stop-color="#b0325b"/><stop offset="0.781" stop-color="#ae315c"/><stop offset="0.919" stop-color="#c83f4c"/><stop offset="0.969" stop-color="#bf3952"/><stop offset="0.994" stop-color="#ac305d"/></linearGradient><linearGradient id="g25" x2="0" y2="1"><stop offset="0.006" stop-color="#2d0a57"/><stop offset="0.119" stop-color="#781c6d"/><stop offset="0.269" stop-color="#a82e5f"/><stop offset="0.431" stop-color="#ad305c"/><stop offset="0.569" stop-color="#821f6b"/><stop offset="0.956" stop-color="#902568"/><stop offset="0.994" stop-color="#972865"/></linearGradient><linearGradient id="g26" x2="0" y2="1"><stop offset="0.006" stop-color="#2d0a57"/><stop offset="0.119" stop-color="#781c6d"/><stop offset="0.269" stop-color="#a92e5f"/><stop offset="0.444" stop-color="#b1325a"/><stop offset="0.594" stop-color="#8c2369"/><stop offset="0.856" stop-color="#962766"/><stop offset="0.881" stop-color="#8a2369"/><stop offset="0.931" stop-color="#a22c61"/><stop offset="0.981" stop-color="#9b2964"/><stop offset="0.994" stop-color="#982865"/></linearGradient><linearGradient id="g27" x2="0" y2="1"><stop offset="0.006" stop-color="#130a33"/><stop offset="0.256" stop-color="#c03a51"/><stop offset="0.444" stop-color="#d14645"/><stop offset="0.544" stop-color="#c83f4b"/><stop offset="0.581" stop-color="#b63457"/><stop offset="0.881" stop-color="#ba3655"/><stop offset="0.919" stop-color="#cd4248"/><stop offset="0.969" stop-color="#c13a51"/><stop offset="0.994" stop-color="#a32c61"/></linearGradient><linearGradient id="g28" x2="0" y2="1"><stop offset="0.006" stop-color="#170b3b"/><stop offset="0.131" stop-color="#66156e"/><stop offset="0.269" stop-color="#9e2a63"/><stop offset="0.469" stop-color="#b53458"/><stop offset="0.544" stop-color="#b0325a"/><stop offset="0.569" stop-color="#972865"/><stop offset="0.931" stop-color="#a22c61"/><stop offset="0.956" stop-color="#a82e5f"/><stop offset="0.994" stop-color="#912568"/></linearGradient><linearGradient id="g29" x2="0" y2="1"><stop offset="0.006" stop-color="#160b39"/><stop offset="0.269" stop-color="#bf3952"/><stop offset="0.431" stop-color="#d94d3e"/><stop offset="0.544" stop-color="#d64b40"/><stop offset="0.569" stop-color="#c13a51"/><stop offset="0.956" stop-color="#c23b50"/><stop offset="0.994" stop-color="#9b2964"/></linearGradient><linearGradient id="g30" x2="0" y2="1"><stop offset="0.006" stop-color="#160b39"/><stop offset="0.131" stop-color="#65156e"/><stop offset="0.269" stop-color="#a12b62"/><stop offset="0.444" stop-color="#be3853"/><stop offset="0.544" stop-color="#bb3754"/><stop offset="0.569" stop-color="#a02b62"/><stop offset="0.844" stop-color="#ad305c"/><stop offset="0.869" stop-color="#b93556"/><stop offset="0.956" stop-color="#bd3853"/><stop offset="0.994" stop-color="#962766"/></linearGradient><linearGradient id="g31" x2="0" y2="1"><stop offset="0.006" stop-color="#130a33"/><stop offset="0.069" stop-color="#2c0a57"/><stop offset="0.281" stop-color="#a62d60"/><stop offset="0.419" stop-color="#c53d4d"/><stop offset="0.544" stop-color="#c53d4e"/><stop offset="0.569" stop-color="#ad305c"/><stop offset="0.644" stop-color="#b83556"/><stop offset="0.844" stop-color="#b33359"/><stop offset="0.906" stop-color="#cd4248"/><stop offset="0.956" stop-color="#cb4149"/><stop offset="0.969" stop-color="#c03a51"/><stop offset="0.994" stop-color="#942667"/></linearGradient><linearGradient id="g32" x2="0" y2="1"><stop offset="0.006" stop-color="#1f0b45"/><stop offset="0.256" stop-color="#bd3853"/><stop offset="0.406" stop-color="#dd513a"/><stop offset="0.544" stop-color="#dd513a"/><stop offset="0.569" stop-color="#ca404a"/><stop offset="0.594" stop-color="#d44941"/><stop offset="0.669" stop-color="#cf4446"/><stop offset="0.731" stop-color="#d54a41"/><stop offset="0.831" stop-color="#d04545"/><stop offset="0.869" stop-color="#c53d4d"/><stop offset="0.919" stop-color="#d54a41"/><stop offset="0.956" stop-color="#d34843"/><stop offset="0.969" stop-color="#c9404b"/><stop offset="0.994" stop-color="#9a2964"/></linearGradient><linearGradient id="g33" x2="0" y2="1"><stop offset="0.006" stop-color="#130a33"/><stop offset="0.269" stop-color="#912567"/><stop offset="0.431" stop-color="#b0315b"/><stop offset="0.544" stop-color="#af315b"/><stop offset="0.569" stop-color="#942667"/><stop offset="0.831" stop-color="#a12b62"/><stop offset="0.869" stop-color="#b93656"/><stop offset="0.956" stop-color="#bf3951"/><stop offset="0.981" stop-color="#a22c61"/><stop offset="0.994" stop-color="#902568"/></linearGradient><linearGradient id="g34" x2="0" y2="1"><stop offset="0.006" stop-color="#160b39"/><stop offset="0.269" stop-color="#b73557"/><stop offset="0.419" stop-color="#d74b40"/><stop offset="0.544" stop-color="#d64b40"/><stop offset="0.569" stop-color="#c03a51"/><stop offset="0.844" stop-color="#c13a51"/><stop offset="0.894" stop-color="#d24743"/><stop offset="0.956" stop-color="#d14545"/><stop offset="0.969" stop-color="#c53d4d"/><stop offset="0.994" stop-color="#942667"/></linearGradient><linearGradient id="g35" x2="0" y2="1"><stop offset="0.006" stop-color="#2d0a58"/><stop offset="0.144" stop-color="#88226a"/><stop offset="0.281" stop-color="#d14645"/><stop offset="0.419" stop-color="#e8602d"/><stop offset="0.544" stop-color="#e75f2d"/><stop offset="0.569" stop-color="#d64a40"/><stop offset="0.644" stop-color="#dd513a"/><stop offset="0.869" stop-color="#da4e3d"/><stop offset="0.956" stop-color="#e05636"/><stop offset="0.969" stop-color="#d24743"/><stop offset="0.981" stop-color="#b1325a"/><stop offset="0.994" stop-color="#992865"/></linearGradient><linearGradient id="g36" x2="0" y2="1"><stop offset="0.006" stop-color="#130a33"/><stop offset="0.069" stop-color="#1c0b41"/><stop offset="0.269" stop-color="#7d1e6c"/><stop offset="0.431" stop-color="#9c2964"/><stop offset="0.544" stop-color="#9b2964"/><stop offset="0.569" stop-color="#83206b"/><stop offset="0.594" stop-color="#912568"/><stop offset="0.669" stop-color="#892269"/><stop offset="0.744" stop-color="#942667"/><stop offset="0.819" stop-color="#972766"/><stop offset="0.844" stop-color="#9f2a63"/><stop offset="0.869" stop-color="#bd3853"/><stop offset="0.919" stop-color="#c53d4e"/><stop offset="0.944" stop-color="#da4f3c"/><stop offset="0.956" stop-color="#d74b3f"/><stop offset="0.981" stop-color="#972766"/><stop offset="0.994" stop-color="#85216a"/></linearGradient><linearGradient id="g37" x2="0" y2="1"><stop offset="0.006" stop-color="#2d0a58"/><stop offset="0.144" stop-color="#88226a"/><stop offset="0.281" stop-color="#d14645"/><stop offset="0.419" stop-color="#e8602d"/><stop offset="0.544" stop-color="#e75f2d"/><stop offset="0.569" stop-color="#d54941"/><stop offset="0.831" stop-color="#d74b40"/><stop offset="0.856" stop-color="#f0721e"/><stop offset="0.906" stop-color="#f37a18"/><stop offset="0.931" stop-color="#fca80d"/><stop offset="0.956" stop-color="#fbb015"/><stop offset="0.969" stop-color="#f2761b"/><stop offset="0.981" stop-color="#b63458"/><stop offset="0.994" stop-color="#962766"/></linearGradient><linearGradient id="g38" x2="0" y2="1"><stop offset="0.006" stop-color="#130a33"/><stop offset="0.269" stop-color="#982865"/><stop offset="0.431" stop-color="#b73557"/><stop offset="0.544" stop-color="#b63457"/><stop offset="0.569" stop-color="#9b2964"/><stop offset="0.831" stop-color="#a72e5f"/><stop offset="0.856" stop-color="#c63d4d"/><stop offset="0.919" stop-color="#d14645"/><stop offset="0.931" stop-color="#e65d2f"/><stop offset="0.944" stop-color="#ec6727"/><stop offset="0.956" stop-color="#ea6429"/><stop offset="0.981" stop-color="#9e2a63"/><stop offset="0.994" stop-color="#892269"/></linearGradient><linearGradient id="g39" x2="0" y2="1"><stop offset="0.006" stop-color="#280a52"/><stop offset="0.144" stop-color="#821f6b"/><stop offset="0.281" stop-color="#cd4248"/><stop offset="0.419" stop-color="#e45b31"/><stop offset="0.544" stop-color="#e45b31"/><stop offset="0.569" stop-color="#d24644"/><stop offset="0.644" stop-color="#d94e3d"/><stop offset="0.831" stop-color="#d84d3e"/><stop offset="0.844" stop-color="#e35933"/><stop offset="0.856" stop-color="#f2751c"/><stop offset="0.906" stop-color="#f47a18"/><stop offset="0.931" stop-color="#fbb015"/><stop offset="0.956" stop-color="#fbb61b"/><stop offset="0.969" stop-color="#f47d15"/><stop offset="0.981" stop-color="#b53458"/><stop offset="0.994" stop-color="#932667"/></linearGradient><linearGradient id="g40" x2="0" y2="1"><stop offset="0.006" stop-color="#130a34"/><stop offset="0.269" stop-color="#b43359"/><stop offset="0.419" stop-color="#d44842"/><stop offset="0.544" stop-color="#d44842"/><stop offset="0.569" stop-color="#bf3952"/><stop offset="0.594" stop-color="#cb4149"/><stop offset="0.669" stop-color="#c43c4e"/><stop offset="0.731" stop-color="#cc4149"/><stop offset="0.819" stop-color="#c9404a"/><stop offset="0.844" stop-color="#d84c3e"/><stop offset="0.856" stop-color="#ee6d22"/><stop offset="0.881" stop-color="#f1741d"/><stop offset="0.906" stop-color="#f1731d"/><stop offset="0.931" stop-color="#fbac11"/><stop offset="0.944" stop-color="#fbb61b"/><stop offset="0.956" stop-color="#fbb015"/><stop offset="0.969" stop-color="#ee6d22"/><stop offset="0.981" stop-color="#aa2f5e"/><stop offset="0.994" stop-color="#8c2369"/></linearGradient><linearGradient id="g41" x2="0" y2="1"><stop offset="0.006" stop-color="#130a33"/><stop offset="0.269" stop-color="#992865"/><stop offset="0.431" stop-color="#b83556"/><stop offset="0.544" stop-color="#b73557"/><stop offset="0.569" stop-color="#9c2a63"/><stop offset="0.831" stop-color="#aa2f5e"/><stop offset="0.856" stop-color="#c63e4d"/><stop offset="0.906" stop-color="#c9404b"/><stop offset="0.919" stop-color="#d14545"/><stop offset="0.931" stop-color="#e65d2f"/><stop offset="0.944" stop-color="#ec6727"/><stop offset="0.956" stop-color="#ea6429"/><stop offset="0.981" stop-color="#9e2a63"/><stop offset="0.994" stop-color="#88226a"/></linearGradient><linearGradient id="g42" x2="0" y2="1"><stop offset="0.006" stop-color="#170b3b"/><stop offset="0.256" stop-color="#b53458"/><stop offset="0.406" stop-color="#d74c3f"/><stop offset="0.544" stop-color="#d84c3f"/><stop offset="0.569" stop-color="#c13b50"/><stop offset="0.831" stop-color="#c53d4d"/><stop offset="0.844" stop-color="#d74b3f"/><stop offset="0.856" stop-color="#ee6d22"/><stop offset="0.881" stop-color="#f1741d"/><stop offset="0.906" stop-color="#f2751c"/><stop offset="0.931" stop-color="#fbad12"/><stop offset="0.956" stop-color="#fbb116"/><stop offset="0.969" stop-color="#f0701f"/><stop offset="0.981" stop-color="#ac305d"/><stop offset="0.994" stop-color="#8d2468"/></linearGradient><linearGradient id="g43" x2="0" y2="1"><stop offset="0.006" stop-color="#170b3a"/><stop offset="0.256" stop-color="#b53458"/><stop offset="0.406" stop-color="#d74b3f"/><stop offset="0.544" stop-color="#d84c3f"/><stop offset="0.569" stop-color="#c33c4f"/><stop offset="0.644" stop-color="#cc4248"/><stop offset="0.831" stop-color="#cd4248"/><stop offset="0.844" stop-color="#da4e3d"/><stop offset="0.856" stop-color="#ef6e21"/><stop offset="0.906" stop-color="#f2751c"/><stop offset="0.931" stop-color="#fbad12"/><stop offset="0.956" stop-color="#fbb116"/><stop offset="0.969" stop-color="#f0701f"/><stop offset="0.981" stop-color="#ac305d"/><stop offset="0.994" stop-color="#8d2468"/></linearGradient><linearGradient id="g44" x2="0" y2="1"><stop offset="0.006" stop-color="#130a33"/><stop offset="0.269" stop-color="#902568"/><stop offset="0.431" stop-color="#af315b"/><stop offset="0.544" stop-color="#ae315c"/><stop offset="0.569" stop-color="#952766"/><stop offset="0.594" stop-color="#a32c61"/><stop offset="0.669" stop-color="#9b2964"/><stop offset="0.731" stop-color="#a52d60"/><stop offset="0.819" stop-color="#a92e5f"/><stop offset="0.869" stop-color="#c83f4b"/><stop offset="0.919" stop-color="#ce4347"/><stop offset="0.931" stop-color="#e55c31"/><stop offset="0.944" stop-color="#eb6628"/><stop offset="0.956" stop-color="#e9622b"/><stop offset="0.981" stop-color="#992865"/><stop offset="0.994" stop-color="#85216a"/></linearGradient><linearGradient id="g45" x2="0" y2="1"><stop offset="0.006" stop-color="#130a33"/><stop offset="0.094" stop-color="#1b0b40"/><stop offset="0.206" stop-color="#59116e"/><stop offset="0.269" stop-color="#84206a"/><stop offset="0.419" stop-color="#aa2f5e"/><stop offset="0.544" stop-color="#aa2f5e"/><stop offset="0.569" stop-color="#902568"/><stop offset="0.831" stop-color="#9b2964"/><stop offset="0.844" stop-color="#b73557"/><stop offset="0.856" stop-color="#e55c30"/><stop offset="0.869" stop-color="#f0721e"/><stop offset="0.906" stop-color="#eb6627"/><stop offset="0.919" stop-color="#f2751c"/><stop offset="0.931" stop-color="#fca40a"/><stop offset="0.944" stop-color="#fbb318"/><stop offset="0.956" stop-color="#fca40a"/><stop offset="0.981" stop-color="#942667"/><stop offset="0.994" stop-color="#7d1e6c"/></linearGradient><linearGradient id="g46" x2="0" y2="1"><stop offset="0.006" stop-color="#1f0b45"/><stop offset="0.144" stop-color="#761b6d"/><stop offset="0.269" stop-color="#b2325a"/><stop offset="0.431" stop-color="#cf4446"/><stop offset="0.544" stop-color="#ce4347"/><stop offset="0.569" stop-color="#b53458"/><stop offset="0.831" stop-color="#bd3853"/><stop offset="0.856" stop-color="#d44842"/><stop offset="0.906" stop-color="#d64a40"/><stop offset="0.931" stop-color="#ee6c22"/><stop offset="0.956" stop-color="#f2751b"/><stop offset="0.969" stop-color="#df5338"/><stop offset="0.981" stop-color="#a92e5e"/><stop offset="0.994" stop-color="#8e2468"/></linearGradient><linearGradient id="g47" x2="0" y2="1"><stop offset="0.006" stop-color="#130a33"/><stop offset="0.281" stop-color="#b33359"/><stop offset="0.419" stop-color="#d04545"/><stop offset="0.544" stop-color="#d04545"/><stop offset="0.569" stop-color="#ba3655"/><stop offset="0.644" stop-color="#c43c4e"/><stop offset="0.831" stop-color="#c53d4d"/><stop offset="0.844" stop-color="#d44942"/><stop offset="0.856" stop-color="#ed6b24"/><stop offset="0.881" stop-color="#f1731d"/><stop offset="0.906" stop-color="#f0721e"/><stop offset="0.931" stop-color="#fbac11"/><stop offset="0.944" stop-color="#fbb61b"/><stop offset="0.956" stop-color="#fbaf14"/><stop offset="0.969" stop-color="#ed6a25"/><stop offset="0.981" stop-color="#a82e5f"/><stop offset="0.994" stop-color="#8a2269"/></linearGradient><linearGradient id="g48" x2="0" y2="1"><stop offset="0.006" stop-color="#130a33"/><stop offset="0.081" stop-color="#340a5d"/><stop offset="0.281" stop-color="#a62d60"/><stop offset="0.419" stop-color="#c53d4d"/><stop offset="0.544" stop-color="#c53d4d"/><stop offset="0.569" stop-color="#af315b"/><stop offset="0.594" stop-color="#bc3754"/><stop offset="0.669" stop-color="#b53458"/><stop offset="0.731" stop-color="#bd3853"/><stop offset="0.819" stop-color="#bb3754"/><stop offset="0.831" stop-color="#bf3952"/><stop offset="0.844" stop-color="#cf4446"/><stop offset="0.856" stop-color="#ec6727"/><stop offset="0.869" stop-color="#f1741c"/><stop offset="0.906" stop-color="#ef6e21"/><stop offset="0.919" stop-color="#f68212"/><stop offset="0.931" stop-color="#fca90e"/><stop offset="0.944" stop-color="#fbb51a"/><stop offset="0.956" stop-color="#fbab10"/><stop offset="0.969" stop-color="#e9612b"/><stop offset="0.981" stop-color="#a22c61"/><stop offset="0.994" stop-color="#86216a"/></linearGradient><linearGradient id="g49" x2="0" y2="1"><stop offset="0.006" stop-color="#250a4e"/><stop offset="0.144" stop-color="#7e1e6c"/><stop offset="0.269" stop-color="#b83556"/><stop offset="0.431" stop-color="#d24644"/><stop offset="0.544" stop-color="#d24744"/><stop offset="0.569" stop-color="#bb3755"/><stop offset="0.831" stop-color="#c43c4e"/><stop offset="0.856" stop-color="#d54a41"/><stop offset="0.894" stop-color="#d14644"/><stop offset="0.944" stop-color="#f1741c"/><stop offset="0.956" stop-color="#f2751b"/><stop offset="0.969" stop-color="#e15735"/><stop offset="0.981" stop-color="#ac305d"/><stop offset="0.994" stop-color="#902568"/></linearGradient><linearGradient id="g50" x2="0" y2="1"><stop offset="0.006" stop-color="#130a33"/><stop offset="0.056" stop-color="#1a0b3f"/><stop offset="0.231" stop-color="#7b1d6c"/><stop offset="0.269" stop-color="#952766"/><stop offset="0.419" stop-color="#b73557"/><stop offset="0.544" stop-color="#b93656"/><stop offset="0.569" stop-color="#a02b62"/><stop offset="0.831" stop-color="#a92f5e"/><stop offset="0.844" stop-color="#c23b50"/><stop offset="0.856" stop-color="#e9612c"/><stop offset="0.869" stop-color="#f1731d"/><stop offset="0.906" stop-color="#ee6b23"/><stop offset="0.919" stop-color="#f47c16"/><stop offset="0.931" stop-color="#fca70c"/><stop offset="0.944" stop-color="#fbb419"/><stop offset="0.956" stop-color="#fca80d"/><stop offset="0.981" stop-color="#9c2964"/><stop offset="0.994" stop-color="#821f6b"/></linearGradient><linearGradient id="g51" x2="0" y2="1"><stop offset="0.006" stop-color="#170b3b"/><stop offset="0.144" stop-color="#6d186e"/><stop offset="0.269" stop-color="#a62d60"/><stop offset="0.444" stop-color="#c03a51"/><stop offset="0.544" stop-color="#c13b50"/><stop offset="0.569" stop-color="#aa2f5e"/><stop offset="0.644" stop-color="#b73557"/><stop offset="0.806" stop-color="#b63457"/><stop offset="0.869" stop-color="#cf4446"/><stop offset="0.906" stop-color="#d04545"/><stop offset="0.919" stop-color="#d94d3e"/><stop offset="0.931" stop-color="#eb6429"/><stop offset="0.956" stop-color="#ee6d22"/><stop offset="0.969" stop-color="#d84c3f"/><stop offset="0.981" stop-color="#a42d60"/><stop offset="0.994" stop-color="#8b2369"/></linearGradient><linearGradient id="g52" x2="0" y2="1"><stop offset="0.006" stop-color="#270a50"/><stop offset="0.144" stop-color="#801f6b"/><stop offset="0.269" stop-color="#c63e4d"/><stop offset="0.431" stop-color="#de5338"/><stop offset="0.544" stop-color="#e05636"/><stop offset="0.569" stop-color="#d04446"/><stop offset="0.594" stop-color="#da4e3d"/><stop offset="0.631" stop-color="#d74c3f"/><stop offset="0.831" stop-color="#db4f3c"/><stop offset="0.844" stop-color="#e45a32"/><stop offset="0.856" stop-color="#f2751b"/><stop offset="0.906" stop-color="#f37a18"/><stop offset="0.931" stop-color="#fbb015"/><stop offset="0.956" stop-color="#fbb61b"/><stop offset="0.969" stop-color="#f47c16"/><stop offset="0.981" stop-color="#b43359"/><stop offset="0.994" stop-color="#912567"/></linearGradient><linearGradient id="g53" x2="0" y2="1"><stop offset="0.006" stop-color="#130a33"/><stop offset="0.069" stop-color="#1d0b42"/><stop offset="0.269" stop-color="#7d1e6c"/><stop offset="0.456" stop-color="#972766"/><stop offset="0.544" stop-color="#9a2964"/><stop offset="0.569" stop-color="#821f6b"/><stop offset="0.831" stop-color="#942766"/><stop offset="0.844" stop-color="#a32c61"/><stop offset="0.856" stop-color="#c03a51"/><stop offset="0.881" stop-color="#ca404a"/><stop offset="0.919" stop-color="#cb4149"/><stop offset="0.931" stop-color="#e65d30"/><stop offset="0.944" stop-color="#ec6925"/><stop offset="0.956" stop-color="#e9622b"/><stop offset="0.981" stop-color="#922567"/><stop offset="0.994" stop-color="#801f6c"/></linearGradient><linearGradient id="g54" x2="0" y2="1"><stop offset="0.006" stop-color="#1e0b44"/><stop offset="0.144" stop-color="#761b6d"/><stop offset="0.269" stop-color="#bd3853"/><stop offset="0.431" stop-color="#d74b40"/><stop offset="0.544" stop-color="#d94e3d"/><stop offset="0.569" stop-color="#c53d4d"/><stop offset="0.831" stop-color="#cb4149"/><stop offset="0.844" stop-color="#db4f3c"/><stop offset="0.856" stop-color="#f0701f"/><stop offset="0.906" stop-color="#f2771a"/><stop offset="0.931" stop-color="#fbaf14"/><stop offset="0.956" stop-color="#fbb318"/><stop offset="0.969" stop-color="#f2751b"/><stop offset="0.981" stop-color="#af315b"/><stop offset="0.994" stop-color="#8e2468"/></linearGradient><linearGradient id="g55" x2="0" y2="1"><stop offset="0.006" stop-color="#130a33"/><stop offset="0.069" stop-color="#2c0a57"/><stop offset="0.269" stop-color="#8e2468"/><stop offset="0.456" stop-color="#a72e5f"/><stop offset="0.544" stop-color="#aa2f5e"/><stop offset="0.569" stop-color="#932667"/><stop offset="0.606" stop-color="#9d2a63"/><stop offset="0.819" stop-color="#a52d60"/><stop offset="0.844" stop-color="#b33359"/><stop offset="0.856" stop-color="#c83f4b"/><stop offset="0.919" stop-color="#d24743"/><stop offset="0.931" stop-color="#e9622b"/><stop offset="0.944" stop-color="#ee6d22"/><stop offset="0.956" stop-color="#ec6826"/><stop offset="0.981" stop-color="#992865"/><stop offset="0.994" stop-color="#84206b"/></linearGradient><linearGradient id="g56" x2="0" y2="1"><stop offset="0.006" stop-color="#2c0a57"/><stop offset="0.144" stop-color="#86216a"/><stop offset="0.269" stop-color="#ca414a"/><stop offset="0.431" stop-color="#e15635"/><stop offset="0.544" stop-color="#e35a32"/><stop offset="0.569" stop-color="#d34843"/><stop offset="0.594" stop-color="#de5239"/><stop offset="0.631" stop-color="#db4f3c"/><stop offset="0.831" stop-color="#de5239"/><stop offset="0.856" stop-color="#f3771a"/><stop offset="0.906" stop-color="#f47b17"/><stop offset="0.931" stop-color="#fbb116"/><stop offset="0.956" stop-color="#fbb81d"/><stop offset="0.969" stop-color="#f58013"/><stop offset="0.981" stop-color="#b63457"/><stop offset="0.994" stop-color="#932667"/></linearGradient><linearGradient id="g57" x2="0" y2="1"><stop offset="0.006" stop-color="#130a33"/><stop offset="0.269" stop-color="#932667"/><stop offset="0.456" stop-color="#ad305c"/><stop offset="0.544" stop-color="#b0325b"/><stop offset="0.569" stop-color="#982865"/><stop offset="0.831" stop-color="#a82e5f"/><stop offset="0.856" stop-color="#cc4248"/><stop offset="0.906" stop-color="#d04545"/><stop offset="0.919" stop-color="#d74c3f"/><stop offset="0.931" stop-color="#ec6726"/><stop offset="0.944" stop-color="#f1721e"/><stop offset="0.956" stop-color="#ef6e21"/><stop offset="0.981" stop-color="#9b2964"/><stop offset="0.994" stop-color="#85216a"/></linearGradient><linearGradient id="g58" x2="0" y2="1"><stop offset="0.006" stop-color="#130a33"/><stop offset="0.256" stop-color="#992865"/><stop offset="0.456" stop-color="#b33359"/><stop offset="0.544" stop-color="#b73557"/><stop offset="0.569" stop-color="#9e2a63"/><stop offset="0.831" stop-color="#ac305d"/><stop offset="0.856" stop-color="#ce4347"/><stop offset="0.906" stop-color="#d14644"/><stop offset="0.919" stop-color="#d94d3d"/><stop offset="0.931" stop-color="#ec6826"/><stop offset="0.944" stop-color="#f1731d"/><stop offset="0.956" stop-color="#ef6f20"/><stop offset="0.969" stop-color="#d44941"/><stop offset="0.981" stop-color="#9f2a63"/><stop offset="0.994" stop-color="#87226a"/></linearGradient><linearGradient id="g59" x2="0" y2="1"><stop offset="0.006" stop-color="#160b39"/><stop offset="0.256" stop-color="#b23359"/><stop offset="0.431" stop-color="#d04545"/><stop offset="0.544" stop-color="#d34842"/><stop offset="0.569" stop-color="#c03951"/><stop offset="0.606" stop-color="#c83f4c"/><stop offset="0.831" stop-color="#cc4249"/><stop offset="0.844" stop-color="#d94d3d"/><stop offset="0.856" stop-color="#ef6e21"/><stop offset="0.881" stop-color="#f1741d"/><stop offset="0.906" stop-color="#f1741c"/><stop offset="0.931" stop-color="#fbac11"/><stop offset="0.956" stop-color="#fbb116"/><stop offset="0.969" stop-color="#ef6f20"/><stop offset="0.981" stop-color="#ab2f5d"/><stop offset="0.994" stop-color="#8b2369"/></linearGradient><linearGradient id="g60" x2="0" y2="1"><stop offset="0.006" stop-color="#2b0a56"/><stop offset="0.144" stop-color="#86216a"/><stop offset="0.269" stop-color="#ca404a"/><stop offset="0.431" stop-color="#e05636"/><stop offset="0.544" stop-color="#e35933"/><stop offset="0.569" stop-color="#d24743"/><stop offset="0.594" stop-color="#dd513a"/><stop offset="0.631" stop-color="#da4e3c"/><stop offset="0.831" stop-color="#dd513a"/><stop offset="0.856" stop-color="#f1741c"/><stop offset="0.906" stop-color="#f2771a"/><stop offset="0.931" stop-color="#fcaa0f"/><stop offset="0.956" stop-color="#fbb116"/><stop offset="0.969" stop-color="#f47a17"/><stop offset="0.981" stop-color="#b43358"/><stop offset="0.994" stop-color="#922667"/></linearGradient><linearGradient id="g61" x2="0" y2="1"><stop offset="0.006" stop-color="#130a33"/><stop offset="0.081" stop-color="#160b39"/><stop offset="0.269" stop-color="#721a6d"/><stop offset="0.456" stop-color="#8b2369"/><stop offset="0.544" stop-color="#8e2468"/><stop offset="0.569" stop-color="#761b6d"/><stop offset="0.819" stop-color="#84206b"/><stop offset="0.844" stop-color="#9d2a63"/><stop offset="0.856" stop-color="#bd3853"/><stop offset="0.881" stop-color="#c73e4c"/><stop offset="0.919" stop-color="#c13a51"/><stop offset="0.931" stop-color="#d74b3f"/><stop offset="0.944" stop-color="#df5437"/><stop offset="0.956" stop-color="#db4f3c"/><stop offset="0.981" stop-color="#8c2369"/><stop offset="0.994" stop-color="#7c1d6c"/></linearGradient><linearGradient id="g62" x2="0" y2="1"><stop offset="0.006" stop-color="#2b0a56"/><stop offset="0.144" stop-color="#85216a"/><stop offset="0.269" stop-color="#ca404a"/><stop offset="0.431" stop-color="#e05536"/><stop offset="0.544" stop-color="#e25834"/><stop offset="0.569" stop-color="#cf4446"/><stop offset="0.831" stop-color="#d04545"/><stop offset="0.856" stop-color="#d94d3e"/><stop offset="0.894" stop-color="#c9404b"/><stop offset="0.956" stop-color="#d54a41"/><stop offset="0.994" stop-color="#912568"/></linearGradient><linearGradient id="g63" x2="0" y2="1"><stop offset="0.006" stop-color="#130a33"/><stop offset="0.056" stop-color="#180b3b"/><stop offset="0.231" stop-color="#781c6d"/><stop offset="0.269" stop-color="#912567"/><stop offset="0.431" stop-color="#b0325b"/><stop offset="0.544" stop-color="#b1325a"/><stop offset="0.569" stop-color="#992865"/><stop offset="0.606" stop-color="#a22c61"/><stop offset="0.819" stop-color="#a52d60"/><stop offset="0.856" stop-color="#c43c4f"/><stop offset="0.919" stop-color="#ae315b"/><stop offset="0.956" stop-color="#b23359"/><stop offset="0.994" stop-color="#84206b"/></linearGradient><linearGradient id="g64" x2="0" y2="1"><stop offset="0.006" stop-color="#2a0a55"/><stop offset="0.144" stop-color="#85206a"/><stop offset="0.269" stop-color="#b83556"/><stop offset="0.456" stop-color="#ce4347"/><stop offset="0.544" stop-color="#cc4248"/><stop offset="0.569" stop-color="#b43359"/><stop offset="0.606" stop-color="#bd3754"/><stop offset="0.844" stop-color="#c33b4f"/><stop offset="0.919" stop-color="#af315b"/><stop offset="0.956" stop-color="#b73557"/><stop offset="0.994" stop-color="#902568"/></linearGradient><linearGradient id="g65" x2="0" y2="1"><stop offset="0.006" stop-color="#130a33"/><stop offset="0.269" stop-color="#a92f5e"/><stop offset="0.431" stop-color="#c53d4d"/><stop offset="0.544" stop-color="#c23b50"/><stop offset="0.569" stop-color="#a62d60"/><stop offset="0.844" stop-color="#ae305c"/><stop offset="0.869" stop-color="#be3952"/><stop offset="0.919" stop-color="#b63457"/><stop offset="0.956" stop-color="#c33c4f"/><stop offset="0.994" stop-color="#88226a"/></linearGradient><linearGradient id="g66" x2="0" y2="1"><stop offset="0.006" stop-color="#130a33"/><stop offset="0.244" stop-color="#8d2468"/><stop offset="0.281" stop-color="#9e2a63"/><stop offset="0.444" stop-color="#ba3655"/><stop offset="0.544" stop-color="#b33359"/><stop offset="0.569" stop-color="#942667"/><stop offset="0.844" stop-color="#9c2964"/><stop offset="0.869" stop-color="#c53d4d"/><stop offset="0.906" stop-color="#ca404a"/><stop offset="0.919" stop-color="#c33c4f"/><stop offset="0.944" stop-color="#de5239"/><stop offset="0.956" stop-color="#dc503b"/><stop offset="0.981" stop-color="#932667"/><stop offset="0.994" stop-color="#84206b"/></linearGradient><linearGradient id="g67" x2="0" y2="1"><stop offset="0.006" stop-color="#130a33"/><stop offset="0.044" stop-color="#1f0b46"/><stop offset="0.269" stop-color="#962766"/><stop offset="0.369" stop-color="#a52d60"/><stop offset="0.406" stop-color="#af315b"/><stop offset="0.531" stop-color="#af315b"/><stop offset="0.556" stop-color="#9b2964"/><stop offset="0.569" stop-color="#892269"/><stop offset="0.844" stop-color="#8f2468"/><stop offset="0.869" stop-color="#c23b50"/><stop offset="0.894" stop-color="#cf4446"/><stop offset="0.919" stop-color="#c23b50"/><stop offset="0.944" stop-color="#e8602c"/><stop offset="0.956" stop-color="#e75e2e"/><stop offset="0.969" stop-color="#b73557"/><stop offset="0.981" stop-color="#8e2468"/><stop offset="0.994" stop-color="#801f6c"/></linearGradient><linearGradient id="g68" x2="0" y2="1"><stop offset="0.006" stop-color="#280a52"/><stop offset="0.094" stop-color="#67166e"/><stop offset="0.256" stop-color="#bd3853"/><stop offset="0.369" stop-color="#cc4249"/><stop offset="0.394" stop-color="#d34743"/><stop offset="0.531" stop-color="#d44842"/><stop offset="0.556" stop-color="#c33c4f"/><stop offset="0.569" stop-color="#b2325a"/><stop offset="0.831" stop-color="#b43358"/><stop offset="0.844" stop-color="#bd3853"/><stop offset="0.869" stop-color="#e8612c"/><stop offset="0.894" stop-color="#f07020"/><stop offset="0.919" stop-color="#ea632a"/><stop offset="0.944" stop-color="#fa9309"/><stop offset="0.956" stop-color="#fa9309"/><stop offset="0.981" stop-color="#aa2f5e"/><stop offset="0.994" stop-color="#952766"/></linearGradient><linearGradient id="g69" x2="0" y2="1"><stop offset="0.006" stop-color="#130a33"/><stop offset="0.044" stop-color="#1a0b3f"/><stop offset="0.269" stop-color="#902568"/><stop offset="0.369" stop-color="#a02b62"/><stop offset="0.406" stop-color="#aa2f5e"/><stop offset="0.531" stop-color="#aa2f5e"/><stop offset="0.556" stop-color="#962766"/><stop offset="0.569" stop-color="#84206b"/><stop offset="0.844" stop-color="#8b2369"/><stop offset="0.869" stop-color="#c23b4f"/><stop offset="0.894" stop-color="#d04545"/><stop offset="0.919" stop-color="#c23b50"/><stop offset="0.944" stop-color="#eb6528"/><stop offset="0.956" stop-color="#e9612c"/><stop offset="0.969" stop-color="#b83556"/><stop offset="0.981" stop-color="#8d2468"/><stop offset="0.994" stop-color="#7e1e6c"/></linearGradient><linearGradient id="g70" x2="0" y2="1"><stop offset="0.006" stop-color="#140a35"/><stop offset="0.094" stop-color="#500e6c"/><stop offset="0.269" stop-color="#a82e5f"/><stop offset="0.369" stop-color="#b73557"/><stop offset="0.406" stop-color="#c03a51"/><stop offset="0.531" stop-color="#c03a51"/><stop offset="0.556" stop-color="#ad305c"/><stop offset="0.569" stop-color="#9b2964"/><stop offset="0.831" stop-color="#9f2a63"/><stop offset="0.844" stop-color="#a52d60"/><stop offset="0.869" stop-color="#d74b3f"/><stop offset="0.894" stop-color="#e25734"/><stop offset="0.919" stop-color="#d84c3f"/><stop offset="0.944" stop-color="#f57f14"/><stop offset="0.956" stop-color="#f47b17"/><stop offset="0.969" stop-color="#cd4248"/><stop offset="0.981" stop-color="#992865"/><stop offset="0.994" stop-color="#86216a"/></linearGradient><linearGradient id="g71" x2="0" y2="1"><stop offset="0.006" stop-color="#1a0b3e"/><stop offset="0.094" stop-color="#58106e"/><stop offset="0.269" stop-color="#af315b"/><stop offset="0.369" stop-color="#be3853"/><stop offset="0.406" stop-color="#c73e4c"/><stop offset="0.531" stop-color="#c73e4c"/><stop offset="0.556" stop-color="#b43458"/><stop offset="0.569" stop-color="#a22c61"/><stop offset="0.831" stop-color="#a52d60"/><stop offset="0.844" stop-color="#ab305d"/><stop offset="0.869" stop-color="#da4e3d"/><stop offset="0.894" stop-color="#e35a32"/><stop offset="0.919" stop-color="#db4f3c"/><stop offset="0.944" stop-color="#f7860e"/><stop offset="0.956" stop-color="#f68311"/><stop offset="0.981" stop-color="#992865"/><stop offset="0.994" stop-color="#85216a"/></linearGradient><linearGradient id="g72" x2="0" y2="1"><stop offset="0.006" stop-color="#130a33"/><stop offset="0.056" stop-color="#150b37"/><stop offset="0.269" stop-color="#83206b"/><stop offset="0.369" stop-color="#932667"/><stop offset="0.406" stop-color="#9d2a63"/><stop offset="0.531" stop-color="#9d2a63"/><stop offset="0.556" stop-color="#892269"/><stop offset="0.569" stop-color="#781c6d"/><stop offset="0.844" stop-color="#7a1c6c"/><stop offset="0.869" stop-color="#aa2f5e"/><stop offset="0.894" stop-color="#b83556"/><stop offset="0.919" stop-color="#ab2f5d"/><stop offset="0.944" stop-color="#d74c3f"/><stop offset="0.956" stop-color="#d64b40"/><stop offset="0.969" stop-color="#a42d60"/><stop offset="0.981" stop-color="#87216a"/><stop offset="0.994" stop-color="#7e1e6c"/></linearGradient><linearGradient id="g73" x2="0" y2="1"><stop offset="0.006" stop-color="#1f0b45"/><stop offset="0.094" stop-color="#5d126e"/><stop offset="0.269" stop-color="#b53458"/><stop offset="0.369" stop-color="#c33c4f"/><stop offset="0.406" stop-color="#cc4149"/><stop offset="0.531" stop-color="#cc4248"/><stop offset="0.556" stop-color="#ba3655"/><stop offset="0.569" stop-color="#a82e5f"/><stop offset="0.831" stop-color="#ab2f5d"/><stop offset="0.844" stop-color="#b23359"/><stop offset="0.869" stop-color="#df5437"/><stop offset="0.894" stop-color="#e9612c"/><stop offset="0.919" stop-color="#e25834"/><stop offset="0.944" stop-color="#f98d0a"/><stop offset="0.956" stop-color="#f88b0b"/><stop offset="0.981" stop-color="#a32c61"/><stop offset="0.994" stop-color="#8e2468"/></linearGradient><linearGradient id="g74" x2="0" y2="1"><stop offset="0.006" stop-color="#130a33"/><stop offset="0.269" stop-color="#9c2964"/><stop offset="0.369" stop-color="#ab305d"/><stop offset="0.406" stop-color="#b53458"/><stop offset="0.531" stop-color="#b53458"/><stop offset="0.556" stop-color="#a22c61"/><stop offset="0.569" stop-color="#8f2568"/><stop offset="0.844" stop-color="#972766"/><stop offset="0.869" stop-color="#c9404b"/><stop offset="0.894" stop-color="#d54941"/><stop offset="0.919" stop-color="#cb4149"/><stop offset="0.944" stop-color="#ef6e21"/><stop offset="0.956" stop-color="#ee6c23"/><stop offset="0.969" stop-color="#c23b50"/><stop offset="0.981" stop-color="#932667"/><stop offset="0.994" stop-color="#82206b"/></linearGradient><linearGradient id="g75" x2="0" y2="1"><stop offset="0.006" stop-color="#130a33"/><stop offset="0.094" stop-color="#130a34"/><stop offset="0.206" stop-color="#4d0d6b"/><stop offset="0.269" stop-color="#6f196e"/><stop offset="0.369" stop-color="#7e1e6c"/><stop offset="0.406" stop-color="#88226a"/><stop offset="0.531" stop-color="#88226a"/><stop offset="0.556" stop-color="#751b6d"/><stop offset="0.569" stop-color="#65156e"/><stop offset="0.844" stop-color="#64156e"/><stop offset="0.869" stop-color="#902568"/><stop offset="0.894" stop-color="#9f2b62"/><stop offset="0.919" stop-color="#922667"/><stop offset="0.944" stop-color="#c03a51"/><stop offset="0.956" stop-color="#c03951"/><stop offset="0.969" stop-color="#8f2468"/><stop offset="0.994" stop-color="#7c1d6c"/></linearGradient><linearGradient id="g76" x2="0" y2="1"><stop offset="0.006" stop-color="#130a33"/><stop offset="0.056" stop-color="#1a0b3e"/><stop offset="0.269" stop-color="#892269"/><stop offset="0.369" stop-color="#982865"/><stop offset="0.406" stop-color="#a22c61"/><stop offset="0.531" stop-color="#a32c61"/><stop offset="0.556" stop-color="#8e2468"/><stop offset="0.569" stop-color="#7d1d6c"/><stop offset="0.844" stop-color="#7b1d6c"/><stop offset="0.869" stop-color="#a32c61"/><stop offset="0.894" stop-color="#b0315b"/><stop offset="0.919" stop-color="#a52d60"/><stop offset="0.944" stop-color="#d44941"/><stop offset="0.956" stop-color="#d44842"/><stop offset="0.969" stop-color="#a02b62"/><stop offset="0.981" stop-color="#801f6c"/><stop offset="0.994" stop-color="#771c6d"/></linearGradient><linearGradient id="g77" x2="0" y2="1"><stop offset="0.006" stop-color="#130a33"/><stop offset="0.256" stop-color="#a12b62"/><stop offset="0.369" stop-color="#b2325a"/><stop offset="0.406" stop-color="#bb3754"/><stop offset="0.531" stop-color="#bc3754"/><stop offset="0.556" stop-color="#a82e5f"/><stop offset="0.569" stop-color="#962766"/><stop offset="0.831" stop-color="#9a2964"/><stop offset="0.844" stop-color="#a02b62"/><stop offset="0.869" stop-color="#d54a41"/><stop offset="0.894" stop-color="#e05536"/><stop offset="0.919" stop-color="#d54a41"/><stop offset="0.944" stop-color="#f47d15"/><stop offset="0.956" stop-color="#f37918"/><stop offset="0.969" stop-color="#c9404a"/><stop offset="0.981" stop-color="#962766"/><stop offset="0.994" stop-color="#82206b"/></linearGradient><linearGradient id="g78" x2="0" y2="1"><stop offset="0.006" stop-color="#250a4e"/><stop offset="0.094" stop-color="#64156e"/><stop offset="0.256" stop-color="#bb3655"/><stop offset="0.369" stop-color="#c9404b"/><stop offset="0.394" stop-color="#d14545"/><stop offset="0.531" stop-color="#d14644"/><stop offset="0.556" stop-color="#c03a51"/><stop offset="0.569" stop-color="#af315b"/><stop offset="0.831" stop-color="#b1325a"/><stop offset="0.844" stop-color="#b93655"/><stop offset="0.869" stop-color="#e65d2f"/><stop offset="0.894" stop-color="#ed6b23"/><stop offset="0.919" stop-color="#e65e2f"/><stop offset="0.944" stop-color="#fa9509"/><stop offset="0.956" stop-color="#fa9209"/><stop offset="0.981" stop-color="#a12b62"/><stop offset="0.994" stop-color="#8b2369"/></linearGradient><linearGradient id="g79" x2="0" y2="1"><stop offset="0.006" stop-color="#130a33"/><stop offset="0.081" stop-color="#170b3a"/><stop offset="0.269" stop-color="#791c6d"/><stop offset="0.369" stop-color="#88226a"/><stop offset="0.394" stop-color="#912567"/><stop offset="0.531" stop-color="#932667"/><stop offset="0.556" stop-color="#7f1e6c"/><stop offset="0.569" stop-color="#6e186e"/><stop offset="0.844" stop-color="#731a6d"/><stop offset="0.869" stop-color="#ac305d"/><stop offset="0.894" stop-color="#bc3754"/><stop offset="0.919" stop-color="#a92e5f"/><stop offset="0.944" stop-color="#da4e3d"/><stop offset="0.956" stop-color="#d64a40"/><stop offset="0.969" stop-color="#9f2b62"/><stop offset="0.981" stop-color="#811f6b"/><stop offset="0.994" stop-color="#761b6d"/></linearGradient><linearGradient id="g80" x2="0" y2="1"><stop offset="0.006" stop-color="#130a33"/><stop offset="0.069" stop-color="#130a33"/><stop offset="0.244" stop-color="#6c186e"/><stop offset="0.269" stop-color="#7a1d6c"/><stop offset="0.369" stop-color="#8a2269"/><stop offset="0.394" stop-color="#932667"/><stop offset="0.531" stop-color="#942667"/><stop offset="0.556" stop-color="#801f6b"/><stop offset="0.569" stop-color="#6f196d"/><stop offset="0.831" stop-color="#721a6d"/><stop offset="0.844" stop-color="#6e186e"/><stop offset="0.869" stop-color="#942667"/><stop offset="0.906" stop-color="#a72d60"/><stop offset="0.919" stop-color="#9c2a63"/><stop offset="0.931" stop-color="#a72e5f"/><stop offset="0.944" stop-color="#c03951"/><stop offset="0.956" stop-color="#c33b4f"/><stop offset="0.969" stop-color="#9a2964"/><stop offset="0.994" stop-color="#8d2468"/></linearGradient><linearGradient id="g81" x2="0" y2="1"><stop offset="0.006" stop-color="#130a33"/><stop offset="0.044" stop-color="#1b0b40"/><stop offset="0.269" stop-color="#912568"/><stop offset="0.369" stop-color="#a02b62"/><stop offset="0.394" stop-color="#a92f5e"/><stop offset="0.531" stop-color="#ab2f5e"/><stop offset="0.556" stop-color="#972766"/><stop offset="0.569" stop-color="#85216a"/><stop offset="0.844" stop-color="#892269"/><stop offset="0.869" stop-color="#b73557"/><stop offset="0.906" stop-color="#ca414a"/><stop offset="0.919" stop-color="#c13a50"/><stop offset="0.931" stop-color="#ca414a"/><stop offset="0.944" stop-color="#dd513a"/><stop offset="0.956" stop-color="#df5338"/><stop offset="0.969" stop-color="#b93656"/><stop offset="0.981" stop-color="#a22c61"/><stop offset="0.994" stop-color="#9b2964"/></linearGradient><linearGradient id="g82" x2="0" y2="1"><stop offset="0.006" stop-color="#2b0a56"/><stop offset="0.094" stop-color="#69176e"/><stop offset="0.256" stop-color="#c03951"/><stop offset="0.369" stop-color="#ce4347"/><stop offset="0.394" stop-color="#d54941"/><stop offset="0.531" stop-color="#d64a40"/><stop offset="0.556" stop-color="#c53d4d"/><stop offset="0.569" stop-color="#b43358"/><stop offset="0.831" stop-color="#b73557"/><stop offset="0.844" stop-color="#c03951"/><stop offset="0.869" stop-color="#e9612c"/><stop offset="0.906" stop-color="#f3771a"/><stop offset="0.919" stop-color="#ee6c22"/><stop offset="0.931" stop-color="#f3771a"/><stop offset="0.944" stop-color="#f99109"/><stop offset="0.956" stop-color="#fa9409"/><stop offset="0.981" stop-color="#bb3755"/><stop offset="0.994" stop-color="#aa2f5e"/></linearGradient><linearGradient id="g83" x2="0" y2="1"><stop offset="0.006" stop-color="#130a33"/><stop offset="0.056" stop-color="#160b39"/><stop offset="0.269" stop-color="#85216a"/><stop offset="0.369" stop-color="#952766"/><stop offset="0.394" stop-color="#9e2a63"/><stop offset="0.531" stop-color="#9f2b62"/><stop offset="0.556" stop-color="#8b2369"/><stop offset="0.569" stop-color="#791c6c"/><stop offset="0.844" stop-color="#7b1d6c"/><stop offset="0.869" stop-color="#a82e5f"/><stop offset="0.906" stop-color="#bc3754"/><stop offset="0.919" stop-color="#b2325a"/><stop offset="0.931" stop-color="#bc3754"/><stop offset="0.944" stop-color="#d14644"/><stop offset="0.956" stop-color="#d34843"/><stop offset="0.969" stop-color="#ab2f5d"/><stop offset="0.981" stop-color="#9b2964"/><stop offset="0.994" stop-color="#962766"/></linearGradient><linearGradient id="g84" x2="0" y2="1"><stop offset="0.006" stop-color="#1a0b3e"/><stop offset="0.094" stop-color="#57106e"/><stop offset="0.269" stop-color="#af315b"/><stop offset="0.369" stop-color="#bd3853"/><stop offset="0.394" stop-color="#c53d4d"/><stop offset="0.531" stop-color="#c63e4c"/><stop offset="0.556" stop-color="#b43358"/><stop offset="0.569" stop-color="#a22c61"/><stop offset="0.831" stop-color="#a52d60"/><stop offset="0.844" stop-color="#ab2f5d"/><stop offset="0.869" stop-color="#d84c3e"/><stop offset="0.906" stop-color="#e65e2f"/><stop offset="0.919" stop-color="#e05537"/><stop offset="0.931" stop-color="#e65e2f"/><stop offset="0.944" stop-color="#f2761b"/><stop offset="0.956" stop-color="#f37919"/><stop offset="0.969" stop-color="#d54941"/><stop offset="0.981" stop-color="#b1325a"/><stop offset="0.994" stop-color="#a42c61"/></linearGradient><linearGradient id="g85" x2="0" y2="1"><stop offset="0.006" stop-color="#130a33"/><stop offset="0.269" stop-color="#9c2a63"/><stop offset="0.369" stop-color="#ac305d"/><stop offset="0.394" stop-color="#b43458"/><stop offset="0.531" stop-color="#b63457"/><stop offset="0.556" stop-color="#a22c61"/><stop offset="0.569" stop-color="#902568"/><stop offset="0.844" stop-color="#962766"/><stop offset="0.869" stop-color="#c63d4d"/><stop offset="0.906" stop-color="#d74b40"/><stop offset="0.919" stop-color="#cf4446"/><stop offset="0.931" stop-color="#d74b40"/><stop offset="0.944" stop-color="#e75f2d"/><stop offset="0.956" stop-color="#e9612c"/><stop offset="0.969" stop-color="#c53d4e"/><stop offset="0.981" stop-color="#a82e5f"/><stop offset="0.994" stop-color="#9e2a63"/></linearGradient><linearGradient id="g86" x2="0" y2="1"><stop offset="0.006" stop-color="#130a33"/><stop offset="0.056" stop-color="#1a0b3f"/><stop offset="0.269" stop-color="#892269"/><stop offset="0.369" stop-color="#982865"/><stop offset="0.394" stop-color="#a22c61"/><stop offset="0.531" stop-color="#a32c61"/><stop offset="0.556" stop-color="#8f2468"/><stop offset="0.569" stop-color="#7d1e6c"/><stop offset="0.844" stop-color="#811f6b"/><stop offset="0.869" stop-color="#af315b"/><stop offset="0.906" stop-color="#c33c4f"/><stop offset="0.919" stop-color="#ba3655"/><stop offset="0.931" stop-color="#c33c4f"/><stop offset="0.944" stop-color="#d74b3f"/><stop offset="0.956" stop-color="#d94d3e"/><stop offset="0.969" stop-color="#b2325a"/><stop offset="0.981" stop-color="#9f2a63"/><stop offset="0.994" stop-color="#982865"/></linearGradient><linearGradient id="g87" x2="0" y2="1"><stop offset="0.006" stop-color="#250a4e"/><stop offset="0.094" stop-color="#63146e"/><stop offset="0.269" stop-color="#bb3755"/><stop offset="0.369" stop-color="#c83f4b"/><stop offset="0.394" stop-color="#d04545"/><stop offset="0.531" stop-color="#d14645"/><stop offset="0.556" stop-color="#bf3952"/><stop offset="0.569" stop-color="#ae315c"/><stop offset="0.831" stop-color="#b1325a"/><stop offset="0.844" stop-color="#b93656"/><stop offset="0.869" stop-color="#e35932"/><stop offset="0.906" stop-color="#ef6e21"/><stop offset="0.919" stop-color="#ea632a"/><stop offset="0.931" stop-color="#ef6e21"/><stop offset="0.944" stop-color="#f7880d"/><stop offset="0.956" stop-color="#f88a0c"/><stop offset="0.981" stop-color="#b83556"/><stop offset="0.994" stop-color="#a92e5f"/></linearGradient><linearGradient id="g88" x2="0" y2="1"><stop offset="0.006" stop-color="#1f0b46"/><stop offset="0.094" stop-color="#5d126e"/><stop offset="0.269" stop-color="#b53458"/><stop offset="0.369" stop-color="#c33b4f"/><stop offset="0.394" stop-color="#cb4149"/><stop offset="0.531" stop-color="#cc4149"/><stop offset="0.556" stop-color="#ba3655"/><stop offset="0.569" stop-color="#a82e5f"/><stop offset="0.831" stop-color="#ab2f5d"/><stop offset="0.844" stop-color="#b2325a"/><stop offset="0.869" stop-color="#de5339"/><stop offset="0.906" stop-color="#eb6628"/><stop offset="0.919" stop-color="#e55c30"/><stop offset="0.931" stop-color="#eb6628"/><stop offset="0.944" stop-color="#f58013"/><stop offset="0.956" stop-color="#f68212"/><stop offset="0.981" stop-color="#b53458"/><stop offset="0.994" stop-color="#a62d60"/></linearGradient><linearGradient id="g89" x2="0" y2="1"><stop offset="0.006" stop-color="#130a33"/><stop offset="0.044" stop-color="#1f0b45"/><stop offset="0.269" stop-color="#952766"/><stop offset="0.369" stop-color="#a52d60"/><stop offset="0.394" stop-color="#ae305c"/><stop offset="0.531" stop-color="#af315b"/><stop offset="0.556" stop-color="#9b2964"/><stop offset="0.569" stop-color="#892269"/><stop offset="0.844" stop-color="#8e2468"/><stop offset="0.869" stop-color="#be3853"/><stop offset="0.906" stop-color="#d04545"/><stop offset="0.919" stop-color="#c83f4c"/><stop offset="0.931" stop-color="#d04545"/><stop offset="0.944" stop-color="#e25734"/><stop offset="0.956" stop-color="#e35933"/><stop offset="0.969" stop-color="#be3852"/><stop offset="0.981" stop-color="#a52d60"/><stop offset="0.994" stop-color="#9c2a63"/></linearGradient><linearGradient id="g90" x2="0" y2="1"><stop offset="0.006" stop-color="#150a36"/><stop offset="0.094" stop-color="#510e6c"/><stop offset="0.269" stop-color="#a92e5e"/><stop offset="0.369" stop-color="#b83556"/><stop offset="0.394" stop-color="#c03a51"/><stop offset="0.531" stop-color="#c13a50"/><stop offset="0.556" stop-color="#ae315c"/><stop offset="0.569" stop-color="#9c2964"/><stop offset="0.844" stop-color="#a52d60"/><stop offset="0.869" stop-color="#d34843"/><stop offset="0.906" stop-color="#e25834"/><stop offset="0.919" stop-color="#db4f3b"/><stop offset="0.931" stop-color="#e25834"/><stop offset="0.944" stop-color="#ef7020"/><stop offset="0.956" stop-color="#f0721e"/><stop offset="0.969" stop-color="#d14645"/><stop offset="0.981" stop-color="#af315b"/><stop offset="0.994" stop-color="#a32c61"/></linearGradient><linearGradient id="g91" x2="0" y2="1"><stop offset="0.006" stop-color="#130a33"/><stop offset="0.069" stop-color="#160b39"/><stop offset="0.269" stop-color="#7f1e6c"/><stop offset="0.369" stop-color="#8e2468"/><stop offset="0.394" stop-color="#972865"/><stop offset="0.531" stop-color="#992865"/><stop offset="0.556" stop-color="#85216a"/><stop offset="0.569" stop-color="#731a6d"/><stop offset="0.844" stop-color="#751b6d"/><stop offset="0.869" stop-color="#a22c61"/><stop offset="0.906" stop-color="#b73557"/><stop offset="0.919" stop-color="#ad305c"/><stop offset="0.931" stop-color="#b73557"/><stop offset="0.944" stop-color="#ce4347"/><stop offset="0.956" stop-color="#cf4446"/><stop offset="0.969" stop-color="#a72e5f"/><stop offset="0.994" stop-color="#962766"/></linearGradient><linearGradient id="g92" x2="0" y2="1"><stop offset="0.006" stop-color="#130a33"/><stop offset="0.256" stop-color="#a12b62"/><stop offset="0.369" stop-color="#b2325a"/><stop offset="0.394" stop-color="#ba3655"/><stop offset="0.531" stop-color="#bc3754"/><stop offset="0.556" stop-color="#a82e5f"/><stop offset="0.569" stop-color="#962766"/><stop offset="0.844" stop-color="#9d2a63"/><stop offset="0.869" stop-color="#cd4248"/><stop offset="0.906" stop-color="#dd513a"/><stop offset="0.919" stop-color="#d54a41"/><stop offset="0.931" stop-color="#dd513a"/><stop offset="0.944" stop-color="#ec6727"/><stop offset="0.956" stop-color="#ed6925"/><stop offset="0.969" stop-color="#cb4149"/><stop offset="0.981" stop-color="#ac305d"/><stop offset="0.994" stop-color="#a12b62"/></linearGradient><linearGradient id="g93" x2="0" y2="1"><stop offset="0.006" stop-color="#290a54"/><stop offset="0.094" stop-color="#68166e"/><stop offset="0.256" stop-color="#be3852"/><stop offset="0.369" stop-color="#cd4248"/><stop offset="0.394" stop-color="#d34842"/><stop offset="0.531" stop-color="#d44941"/><stop offset="0.556" stop-color="#c43c4e"/><stop offset="0.569" stop-color="#b23359"/><stop offset="0.831" stop-color="#b53458"/><stop offset="0.844" stop-color="#be3952"/><stop offset="0.869" stop-color="#e8602d"/><stop offset="0.906" stop-color="#f2761b"/><stop offset="0.919" stop-color="#ee6b23"/><stop offset="0.931" stop-color="#f2761b"/><stop offset="0.944" stop-color="#f99009"/><stop offset="0.956" stop-color="#fa9309"/><stop offset="0.981" stop-color="#ba3655"/><stop offset="0.994" stop-color="#a92e5f"/></linearGradient><linearGradient id="g94" x2="0" y2="1"><stop offset="0.006" stop-color="#130a33"/><stop offset="0.269" stop-color="#9d2a63"/><stop offset="0.369" stop-color="#ac305d"/><stop offset="0.394" stop-color="#b53458"/><stop offset="0.531" stop-color="#b63457"/><stop offset="0.556" stop-color="#a22c61"/><stop offset="0.569" stop-color="#902568"/><stop offset="0.844" stop-color="#972865"/><stop offset="0.869" stop-color="#c83f4c"/><stop offset="0.906" stop-color="#d84d3e"/><stop offset="0.919" stop-color="#d14645"/><stop offset="0.931" stop-color="#d84d3e"/><stop offset="0.944" stop-color="#e9612c"/><stop offset="0.956" stop-color="#ea632a"/><stop offset="0.969" stop-color="#c63e4d"/><stop offset="0.981" stop-color="#a72e5f"/><stop offset="0.994" stop-color="#9c2a63"/></linearGradient><linearGradient id="g95" x2="0" y2="1"><stop offset="0.006" stop-color="#250a4e"/><stop offset="0.094" stop-color="#64156e"/><stop offset="0.256" stop-color="#ba3655"/><stop offset="0.369" stop-color="#c9404b"/><stop offset="0.394" stop-color="#d04545"/><stop offset="0.531" stop-color="#d14644"/><stop offset="0.556" stop-color="#c03a51"/><stop offset="0.569" stop-color="#ae315c"/><stop offset="0.831" stop-color="#b1325a"/><stop offset="0.844" stop-color="#ba3655"/><stop offset="0.869" stop-color="#e55c30"/><stop offset="0.906" stop-color="#f0711f"/><stop offset="0.919" stop-color="#ec6727"/><stop offset="0.931" stop-color="#f0711f"/><stop offset="0.944" stop-color="#f88b0b"/><stop offset="0.956" stop-color="#f98e09"/><stop offset="0.981" stop-color="#b63457"/><stop offset="0.994" stop-color="#a52d60"/></linearGradient><linearGradient id="g96" x2="0" y2="1"><stop offset="0.006" stop-color="#1f0b45"/><stop offset="0.094" stop-color="#5d126e"/><stop offset="0.269" stop-color="#b53458"/><stop offset="0.369" stop-color="#c33c4f"/><stop offset="0.394" stop-color="#cb4149"/><stop offset="0.531" stop-color="#cc4249"/><stop offset="0.556" stop-color="#ba3655"/><stop offset="0.569" stop-color="#a82e5f"/><stop offset="0.831" stop-color="#ab2f5d"/><stop offset="0.844" stop-color="#b33359"/><stop offset="0.869" stop-color="#df5437"/><stop offset="0.906" stop-color="#ec6826"/><stop offset="0.919" stop-color="#e65e2f"/><stop offset="0.931" stop-color="#ec6826"/><stop offset="0.944" stop-color="#f68112"/><stop offset="0.956" stop-color="#f68410"/><stop offset="0.981" stop-color="#b33359"/><stop offset="0.994" stop-color="#a32c61"/></linearGradient><linearGradient id="g97" x2="0" y2="1"><stop offset="0.006" stop-color="#130a33"/><stop offset="0.069" stop-color="#160b38"/><stop offset="0.269" stop-color="#7e1e6c"/><stop offset="0.369" stop-color="#8d2468"/><stop offset="0.394" stop-color="#962766"/><stop offset="0.531" stop-color="#982865"/><stop offset="0.556" stop-color="#84206b"/><stop offset="0.569" stop-color="#731a6d"/><stop offset="0.844" stop-color="#751b6d"/><stop offset="0.869" stop-color="#a22c61"/><stop offset="0.906" stop-color="#b73557"/><stop offset="0.919" stop-color="#ad305c"/><stop offset="0.931" stop-color="#b73557"/><stop offset="0.944" stop-color="#ce4347"/><stop offset="0.956" stop-color="#cf4446"/><stop offset="0.969" stop-color="#a72d60"/><stop offset="0.981" stop-color="#972865"/><stop offset="0.994" stop-color="#922667"/></linearGradient><linearGradient id="g98" x2="0" y2="1"><stop offset="0.006" stop-color="#130a33"/><stop offset="0.044" stop-color="#200b47"/><stop offset="0.269" stop-color="#972766"/><stop offset="0.369" stop-color="#a62d60"/><stop offset="0.394" stop-color="#af315b"/><stop offset="0.531" stop-color="#b0325b"/><stop offset="0.556" stop-color="#9c2a63"/><stop offset="0.569" stop-color="#8a2369"/><stop offset="0.844" stop-color="#902568"/><stop offset="0.869" stop-color="#c13a51"/><stop offset="0.906" stop-color="#d34743"/><stop offset="0.919" stop-color="#cb4149"/><stop offset="0.931" stop-color="#d34743"/><stop offset="0.944" stop-color="#e45a32"/><stop offset="0.956" stop-color="#e55c30"/><stop offset="0.969" stop-color="#c03a51"/><stop offset="0.981" stop-color="#a42d60"/><stop offset="0.994" stop-color="#9a2964"/></linearGradient><linearGradient id="g99" x2="0" y2="1"><stop offset="0.006" stop-color="#140a35"/><stop offset="0.094" stop-color="#500e6c"/><stop offset="0.269" stop-color="#a82e5f"/><stop offset="0.369" stop-color="#b73557"/><stop offset="0.394" stop-color="#bf3952"/><stop offset="0.531" stop-color="#c03a51"/><stop offset="0.556" stop-color="#ad305c"/><stop offset="0.569" stop-color="#9b2964"/><stop offset="0.831" stop-color="#9e2a63"/><stop offset="0.844" stop-color="#a42d60"/><stop offset="0.869" stop-color="#d34843"/><stop offset="0.906" stop-color="#e25834"/><stop offset="0.919" stop-color="#db4f3b"/><stop offset="0.931" stop-color="#e25834"/><stop offset="0.944" stop-color="#ef7020"/><stop offset="0.956" stop-color="#f0721e"/><stop offset="0.969" stop-color="#d04545"/><stop offset="0.981" stop-color="#ad305c"/><stop offset="0.994" stop-color="#9f2b62"/></linearGradient><linearGradient id="g100" x2="0" y2="1"><stop offset="0.006" stop-color="#180b3c"/><stop offset="0.094" stop-color="#56106e"/><stop offset="0.269" stop-color="#ad305c"/><stop offset="0.369" stop-color="#bc3754"/><stop offset="0.394" stop-color="#c43c4e"/><stop offset="0.531" stop-color="#c53d4d"/><stop offset="0.556" stop-color="#b23359"/><stop offset="0.569" stop-color="#a02b62"/><stop offset="0.831" stop-color="#a42c61"/><stop offset="0.844" stop-color="#aa2f5e"/><stop offset="0.869" stop-color="#d84c3e"/><stop offset="0.906" stop-color="#e65e2f"/><stop offset="0.919" stop-color="#e05537"/><stop offset="0.931" stop-color="#e65e2f"/><stop offset="0.944" stop-color="#f2761a"/><stop offset="0.956" stop-color="#f37918"/><stop offset="0.969" stop-color="#d54941"/><stop offset="0.981" stop-color="#b0325b"/><stop offset="0.994" stop-color="#a22c61"/></linearGradient><linearGradient id="g101" x2="0" y2="1"><stop offset="0.006" stop-color="#130a33"/><stop offset="0.256" stop-color="#a02b62"/><stop offset="0.369" stop-color="#b1325a"/><stop offset="0.394" stop-color="#ba3655"/><stop offset="0.531" stop-color="#bb3754"/><stop offset="0.556" stop-color="#a82e5f"/><stop offset="0.569" stop-color="#952766"/><stop offset="0.844" stop-color="#9e2a63"/><stop offset="0.869" stop-color="#ce4347"/><stop offset="0.906" stop-color="#de5239"/><stop offset="0.919" stop-color="#d64b40"/><stop offset="0.931" stop-color="#de5239"/><stop offset="0.944" stop-color="#ec6826"/><stop offset="0.956" stop-color="#ed6b24"/><stop offset="0.969" stop-color="#cb4149"/><stop offset="0.981" stop-color="#a92e5f"/><stop offset="0.994" stop-color="#9c2a63"/></linearGradient><linearGradient id="g102" x2="0" y2="1"><stop offset="0.006" stop-color="#130a33"/><stop offset="0.056" stop-color="#150a36"/><stop offset="0.269" stop-color="#83206b"/><stop offset="0.369" stop-color="#932667"/><stop offset="0.394" stop-color="#9c2964"/><stop offset="0.531" stop-color="#9d2a63"/><stop offset="0.556" stop-color="#892269"/><stop offset="0.569" stop-color="#771c6d"/><stop offset="0.844" stop-color="#7b1d6c"/><stop offset="0.869" stop-color="#a92f5e"/><stop offset="0.906" stop-color="#be3952"/><stop offset="0.919" stop-color="#b43458"/><stop offset="0.931" stop-color="#be3952"/><stop offset="0.944" stop-color="#d34843"/><stop offset="0.956" stop-color="#d54941"/><stop offset="0.969" stop-color="#ac305d"/><stop offset="0.981" stop-color="#992865"/><stop offset="0.994" stop-color="#932667"/></linearGradient><linearGradient id="g103" x2="0" y2="1"><stop offset="0.006" stop-color="#130a33"/><stop offset="0.044" stop-color="#150b38"/><stop offset="0.269" stop-color="#8b2369"/><stop offset="0.369" stop-color="#9b2964"/><stop offset="0.394" stop-color="#a42c61"/><stop offset="0.531" stop-color="#a52d60"/><stop offset="0.556" stop-color="#912567"/><stop offset="0.569" stop-color="#7f1e6c"/><stop offset="0.844" stop-color="#84206b"/><stop offset="0.869" stop-color="#b43359"/><stop offset="0.906" stop-color="#c73f4c"/><stop offset="0.919" stop-color="#be3952"/><stop offset="0.931" stop-color="#c73f4c"/><stop offset="0.944" stop-color="#db4f3c"/><stop offset="0.956" stop-color="#dc503b"/><stop offset="0.969" stop-color="#b53458"/><stop offset="0.981" stop-color="#9d2a63"/><stop offset="0.994" stop-color="#952766"/></linearGradient><linearGradient id="g104" x2="0" y2="1"><stop offset="0.006" stop-color="#130a33"/><stop offset="0.081" stop-color="#140a36"/><stop offset="0.244" stop-color="#68166e"/><stop offset="0.269" stop-color="#761b6d"/><stop offset="0.369" stop-color="#85216a"/><stop offset="0.394" stop-color="#8e2468"/><stop offset="0.531" stop-color="#902568"/><stop offset="0.556" stop-color="#7c1d6c"/><stop offset="0.569" stop-color="#6b176e"/><stop offset="0.844" stop-color="#6d186e"/><stop offset="0.869" stop-color="#982865"/><stop offset="0.906" stop-color="#ae315c"/><stop offset="0.919" stop-color="#a42c61"/><stop offset="0.931" stop-color="#ae315c"/><stop offset="0.944" stop-color="#c53d4d"/><stop offset="0.956" stop-color="#c73e4c"/><stop offset="0.969" stop-color="#9e2a63"/><stop offset="0.994" stop-color="#8f2468"/></linearGradient><linearGradient id="g105" x2="0" y2="1"><stop offset="0.006" stop-color="#130a33"/><stop offset="0.044" stop-color="#1a0b3e"/><stop offset="0.269" stop-color="#902568"/><stop offset="0.369" stop-color="#9f2b62"/><stop offset="0.394" stop-color="#a92e5f"/><stop offset="0.531" stop-color="#aa2f5e"/><stop offset="0.556" stop-color="#962766"/><stop offset="0.569" stop-color="#84206b"/><stop offset="0.844" stop-color="#892269"/><stop offset="0.869" stop-color="#b93656"/><stop offset="0.906" stop-color="#cc4248"/><stop offset="0.919" stop-color="#c33c4f"/><stop offset="0.931" stop-color="#cc4248"/><stop offset="0.944" stop-color="#de5338"/><stop offset="0.956" stop-color="#e05536"/><stop offset="0.969" stop-color="#ba3655"/><stop offset="0.981" stop-color="#a12b62"/><stop offset="0.994" stop-color="#982865"/></linearGradient></defs><rect x="0" width="1" height="80" fill="url(#g0)"/><rect x="1" width="1" height="80" fill="url(#g1)"/><rect x="2" width="1" height="80" fill="url(#g2)"/><rect x="3" width="1" height="80" fill="url(#g3)"/><rect x="4" width="1" height="80" fill="url(#g4)"/><rect x="5" width="1" height="80" fill="url(#g5)"/><rect x="6" width="1" height="80" fill="url(#g6)"/><rect x="7" width="1" height="80" fill="url(#g7)"/><rect x="8" width="1" height="80" fill="url(#g8)"/><rect x="9" width="1" height="80" fill="url(#g9)"/><rect x="10" width="1" height="80" fill="url(#g10)"/><rect x="11" width="1" height="80" fill="url(#g11)"/><rect x="12" width="1" height="80" fill="url(#g12)"/><rect x="13" width="1" height="80" fill="url(#g13)"/><rect x="14" width="1" height="80" fill="url(#g14)"/><rect x="15" width="1" height="80" fill="url(#g15)"/><rect x="16" width="1" height="80" fill="url(#g16)"/><rect x="17" width="1" height="80" fill="url(#g17)"/><rect x="18" width="1" height="80" fill="url(#g18)"/><rect x="19" width="1" height="80" fill="url(#g19)"/><rect x="20" width="1" height="80" fill="url(#g20)"/><rect x="21" width="1" height="80" fill="url(#g21)"/><rect x="22" width="1" height="80" fill="url(#g22)"/><rect x="23" width="1" height="80" fill="url(#g23)"/><rect x="24" width="1" height="80" fill="url(#g24)"/><rect x="25" width="1" height="80" fill="url(#g25)"/><rect x="26" width="1" height="80" fill="url(#g26)"/><rect x="27" width="1" height="80" fill="url(#g27)"/><rect x="28" width="1" height="80" fill="url(#g28)"/><rect x="29" width="1" height="80" fill="url(#g29)"/><rect x="30" width="1" height="80" fill="url(#g30)"/><rect x="31" width="1" height="80" fill="url(#g31)"/><rect x="32" width="1" height="80" fill="url(#g32)"/><rect x="33" width="1" height="80" fill="url(#g33)"/><rect x="34" width="1" height="80" fill="url(#g34)"/><rect x="35" width="1" height="80" fill="url(#g35)"/><rect x="36" width="1" height="80" fill="url(#g36)"/><rect x="37" width="1" height="80" fill="url(#g37)"/><rect x="38" width="1" height="80" fill="url(#g38)"/><rect x="39" width="1" height="80" fill="url(#g39)"/><rect x="40" width="1" height="80" fill="url(#g40)"/><rect x="41" width="1" height="80" fill="url(#g41)"/><rect x="42" width="1" height="80" fill="url(#g42)"/><rect x="43" width="1" height="80" fill="url(#g43)"/><rect x="44" width="1" height="80" fill="url(#g44)"/><rect x="45" width="1" height="80" fill="url(#g45)"/><rect x="46" width="1" height="80" fill="url(#g46)"/><rect x="47" width="1" height="80" fill="url(#g47)"/><rect x="48" width="1" height="80" fill="url(#g48)"/><rect x="49" width="1" height="80" fill="url(#g49)"/><rect x="50" width="1" height="80" fill="url(#g50)"/><rect x="51" width="1" height="80" fill="url(#g51)"/><rect x="52" width="1" height="80" fill="url(#g52)"/><rect x="53" width="1" height="80" fill="url(#g53)"/><rect x="54" width="1" height="80" fill="url(#g54)"/><rect x="55" width="1" height="80" fill="url(#g55)"/><rect x="56" width="1" height="80" fill="url(#g56)"/><rect x="57" width="1" height="80" fill="url(#g57)"/><rect x="58" width="1" height="80" fill="url(#g58)"/><rect x="59" width="1" height="80" fill="url(#g59)"/><rect x="60" width="1" height="80" fill="url(#g60)"/><rect x="61" width="1" height="80" fill="url(#g61)"/><rect x="62" width="1" height="80" fill="url(#g62)"/><rect x="63" width="1" height="80" fill="url(#g63)"/><rect x="64" width="1" height="80" fill="url(#g64)"/><rect x="65" width="1" height="80" fill="url(#g65)"/><rect x="66" width="1" height="80" fill="url(#g66)"/><rect x="67" width="1" height="80" fill="url(#g67)"/><rect x="68" width="3" height="80" fill="url(#g68)"/><rect x="71" width="1" height="80" fill="url(#g69)"/><rect x="72" width="2" height="80" fill="url(#g70)"/><rect x="74" width="1" height="80" fill="url(#g68)"/><rect x="75" width="1" height="80" fill="url(#g71)"/><rect x="76" width="1" height="80" fill="url(#g72)"/><rect x="77" width="1" height="80" fill="url(#g70)"/><rect x="78" width="1" height="80" fill="url(#g73)"/><rect x="79" width="1" height="80" fill="url(#g74)"/><rect x="80" width="1" height="80" fill="url(#g69)"/><rect x="81" width="1" height="80" fill="url(#g75)"/><rect x="82" width="1" height="80" fill="url(#g76)"/><rect x="83" width="1" height="80" fill="url(#g68)"/><rect x="84" width="1" height="80" fill="url(#g67)"/><rect x="85" width="1" height="80" fill="url(#g77)"/><rect x="86" width="1" height="80" fill="url(#g78)"/><rect x="87" width="1" height="80" fill="url(#g72)"/><rect x="88" width="1" height="80" fill="url(#g78)"/><rect x="89" width="1" height="80" fill="url(#g67)"/><rect x="90" width="1" height="80" fill="url(#g77)"/><rect x="91" width="1" height="80" fill="url(#g67)"/><rect x="92" width="1" height="80" fill="url(#g77)"/><rect x="93" width="1" height="80" fill="url(#g67)"/><rect x="94" width="1" height="80" fill="url(#g78)"/><rect x="95" width="1" height="80" fill="url(#g77)"/><rect x="96" width="1" height="80" fill="url(#g71)"/><rect x="97" width="1" height="80" fill="url(#g77)"/><rect x="98" width="1" height="80" fill="url(#g78)"/><rect x="99" width="1" height="80" fill="url(#g79)"/><rect x="100" width="1" height="80" fill="url(#g78)"/><rect x="101" width="1" height="80" fill="url(#g69)"/><rect x="102" width="1" height="80" fill="url(#g78)"/><rect x="103" width="1" height="80" fill="url(#g74)"/><rect x="104" width="2" height="80" fill="url(#g78)"/><rect x="106" width="1" height="80" fill="url(#g69)"/><rect x="107" width="1" height="80" fill="url(#g78)"/><rect x="108" width="1" height="80" fill="url(#g70)"/><rect x="109" width="1" height="80" fill="url(#g74)"/><rect x="110" width="2" height="80" fill="url(#g77)"/><rect x="112" width="1" height="80" fill="url(#g78)"/><rect x="113" width="1" height="80" fill="url(#g67)"/><rect x="114" width="2" height="80" fill="url(#g71)"/><rect x="116" width="1" height="80" fill="url(#g74)"/><rect x="117" width="1" height="80" fill="url(#g70)"/><rect x="118" width="1" height="80" fill="url(#g76)"/><rect x="119" width="1" height="80" fill="url(#g73)"/><rect x="120" width="1" height="80" fill="url(#g69)"/><rect x="121" width="1" height="80" fill="url(#g78)"/><rect x="122" width="1" height="80" fill="url(#g74)"/><rect x="123" width="1" height="80" fill="url(#g73)"/><rect x="124" width="1" height="80" fill="url(#g77)"/><rect x="125" width="1" height="80" fill="url(#g78)"/><rect x="126" width="1" height="80" fill="url(#g72)"/><rect x="127" width="1" height="80" fill="url(#g71)"/><rect x="128" width="1" height="80" fill="url(#g76)"/><rect x="129" width="1" height="80" fill="url(#g78)"/><rect x="130" width="1" height="80" fill="url(#g67)"/><rect x="131" width="1" height="80" fill="url(#g78)"/><rect x="132" width="1" height="80" fill="url(#g76)"/><rect x="133" width="1" height="80" fill="url(#g70)"/><rect x="134" width="1" height="80" fill="url(#g78)"/><rect x="135" width="1" height="80" fill="url(#g68)"/><rect x="136" width="1" height="80" fill="url(#g74)"/><rect x="137" width="1" height="80" fill="url(#g67)"/><rect x="138" width="1" height="80" fill="url(#g68)"/><rect x="139" width="1" height="80" fill="url(#g75)"/><rect x="140" width="2" height="80" fill="url(#g68)"/><rect x="142" width="1" height="80" fill="url(#g72)"/><rect x="143" width="1" height="80" fill="url(#g68)"/><rect x="144" width="1" height="80" fill="url(#g80)"/><rect x="145" width="1" height="80" fill="url(#g78)"/><rect x="146" width="1" height="80" fill="url(#g73)"/><rect x="147" width="1" height="80" fill="url(#g81)"/><rect x="148" width="1" height="80" fill="url(#g82)"/><rect x="149" width="1" height="80" fill="url(#g83)"/><rect x="150" width="1" height="80" fill="url(#g84)"/><rect x="151" width="1" height="80" fill="url(#g85)"/><rect x="152" width="2" height="80" fill="url(#g84)"/><rect x="154" width="1" height="80" fill="url(#g86)"/><rect x="155" width="1" height="80" fill="url(#g87)"/><rect x="156" width="1" height="80" fill="url(#g81)"/><rect x="157" width="1" height="80" fill="url(#g88)"/><rect x="158" width="1" height="80" fill="url(#g89)"/><rect x="159" width="1" height="80" fill="url(#g90)"/><rect x="160" width="1" height="80" fill="url(#g88)"/><rect x="161" width="1" height="80" fill="url(#g81)"/><rect x="162" width="1" height="80" fill="url(#g82)"/><rect x="163" width="1" height="80" fill="url(#g86)"/><rect x="164" width="1" height="80" fill="url(#g88)"/><rect x="165" width="1" height="80" fill="url(#g81)"/><rect x="166" width="1" height="80" fill="url(#g90)"/><rect x="167" width="1" height="80" fill="url(#g86)"/><rect x="168" width="1" height="80" fill="url(#g82)"/><rect x="169" width="1" height="80" fill="url(#g81)"/><rect x="170" width="1" height="80" fill="url(#g87)"/><rect x="171" width="1" height="80" fill="url(#g83)"/><rect x="172" width="1" height="80" fill="url(#g82)"/><rect x="173" width="1" height="80" fill="url(#g91)"/><rect x="174" width="1" height="80" fill="url(#g87)"/><rect x="175" width="1" height="80" fill="url(#g81)"/><rect x="176" width="1" height="80" fill="url(#g88)"/><rect x="177" width="1" height="80" fill="url(#g85)"/><rect x="178" width="2" height="80" fill="url(#g88)"/><rect x="180" width="1" height="80" fill="url(#g92)"/><rect x="181" width="1" height="80" fill="url(#g82)"/><rect x="182" width="1" height="80" fill="url(#g90)"/><rect x="183" width="1" height="80" fill="url(#g82)"/><rect x="184" width="1" height="80" fill="url(#g92)"/><rect x="185" width="2" height="80" fill="url(#g82)"/><rect x="187" width="2" height="80" fill="url(#g84)"/><rect x="189" width="1" height="80" fill="url(#g85)"/><rect x="190" width="1" height="80" fill="url(#g87)"/><rect x="191" width="1" height="80" fill="url(#g82)"/><rect x="192" width="1" height="80" fill="url(#g85)"/><rect x="193" width="1" height="80" fill="url(#g82)"/><rect x="194" width="3" height="80" fill="url(#g92)"/><rect x="197" width="2" height="80" fill="url(#g82)"/><rect x="199" width="1" height="80" fill="url(#g89)"/><rect x="200" width="1" height="80" fill="url(#g82)"/><rect x="201" width="1" height="80" fill="url(#g92)"/><rect x="202" width="2" height="80" fill="url(#g84)"/><rect x="204" width="1" height="80" fill="url(#g90)"/><rect x="205" width="1" height="80" fill="url(#g85)"/><rect x="206" width="1" height="80" fill="url(#g92)"/><rect x="207" width="1" height="80" fill="url(#g90)"/><rect x="208" width="1" height="80" fill="url(#g92)"/><rect x="209" width="1" height="80" fill="url(#g88)"/><rect x="210" width="2" height="80" fill="url(#g82)"/><rect x="212" width="1" height="80" fill="url(#g89)"/><rect x="213" width="1" height="80" fill="url(#g92)"/><rect x="214" width="2" height="80" fill="url(#g84)"/><rect x="216" width="1" height="80" fill="url(#g86)"/><rect x="217" width="1" height="80" fill="url(#g82)"/><rect x="218" width="1" height="80" fill="url(#g91)"/><rect x="219" width="2" height="80" fill="url(#g82)"/><rect x="221" width="1" height="80" fill="url(#g85)"/><rect x="222" width="1" height="80" fill="url(#g88)"/><rect x="223" width="1" height="80" fill="url(#g90)"/><rect x="224" width="1" height="80" fill="url(#g88)"/><rect x="225" width="1" height="80" fill="url(#g85)"/><rect x="226" width="1" height="80" fill="url(#g86)"/><rect x="227" width="1" height="80" fill="url(#g93)"/><rect x="228" width="1" height="80" fill="url(#g94)"/><rect x="229" width="1" height="80" fill="url(#g95)"/><rect x="230" width="1" height="80" fill="url(#g94)"/><rect x="231" width="1" height="80" fill="url(#g96)"/><rect x="232" width="1" height="80" fill="url(#g94)"/><rect x="233" width="1" height="80" fill="url(#g97)"/><rect x="234" width="1" height="80" fill="url(#g98)"/><rect x="235" width="1" height="80" fill="url(#g94)"/><rect x="236" width="1" height="80" fill="url(#g99)"/><rect x="237" width="1" height="80" fill="url(#g95)"/><rect x="238" width="1" height="80" fill="url(#g94)"/><rect x="239" width="1" height="80" fill="url(#g95)"/><rect x="240" width="2" height="80" fill="url(#g98)"/><rect x="242" width="1" height="80" fill="url(#g100)"/><rect x="243" width="1" height="80" fill="url(#g95)"/><rect x="244" width="1" height="80" fill="url(#g101)"/><rect x="245" width="1" height="80" fill="url(#g102)"/><rect x="246" width="3" height="80" fill="url(#g95)"/><rect x="249" width="1" height="80" fill="url(#g101)"/><rect x="250" width="1" height="80" fill="url(#g95)"/><rect x="251" width="1" height="80" fill="url(#g97)"/><rect x="252" width="1" height="80" fill="url(#g96)"/><rect x="253" width="1" height="80" fill="url(#g99)"/><rect x="254" width="1" height="80" fill="url(#g103)"/><rect x="255" width="1" height="80" fill="url(#g95)"/><rect x="256" width="1" height="80" fill="url(#g103)"/><rect x="257" width="1" height="80" fill="url(#g95)"/><rect x="258" width="1" height="80" fill="url(#g104)"/><rect x="259" width="1" height="80" fill="url(#g95)"/><rect x="260" width="1" height="80" fill="url(#g104)"/><rect x="261" width="1" height="80" fill="url(#g95)"/><rect x="262" width="1" height="80" fill="url(#g98)"/><rect x="263" width="1" height="80" fill="url(#g99)"/><rect x="264" width="1" height="80" fill="url(#g105)"/><rect x="265" width="1" height="80" fill="url(#g95)"/><rect x="266" width="1" height="80" fill="url(#g101)"/><rect x="267" width="1" height="80" fill="url(#g99)"/><rect x="268" width="1" height="80" fill="url(#g96)"/><rect x="269" width="1" height="80" fill="url(#g105)"/><rect x="270" width="1" height="80" fill="url(#g95)"/><rect x="271" width="1" height="80" fill="url(#g97)"/><rect x="272" width="1" height="80" fill="url(#g95)"/><rect x="273" width="1" height="80" fill="url(#g105)"/><rect x="274" width="1" height="80" fill="url(#g99)"/><rect x="275" width="1" height="80" fill="url(#g95)"/><rect x="276" width="1" height="80" fill="url(#g94)"/><rect x="277" width="2" height="80" fill="url(#g95)"/><rect x="279" width="1" height="80" fill="url(#g99)"/><rect x="280" width="1" height="80" fill="url(#g96)"/><rect x="281" width="1" height="80" fill="url(#g94)"/><rect x="282" width="1" height="80" fill="url(#g95)"/><rect x="283" width="1" height="80" fill="url(#g99)"/><rect x="284" width="1" height="80" fill="url(#g100)"/><rect x="285" width="1" height="80" fill="url(#g98)"/><rect x="286" width="1" height="80" fill="url(#g93)"/><rect x="287" width="1" height="80" fill="url(#g105)"/><rect x="288" width="1" height="80" fill="url(#g96)"/><rect x="289" width="1" height="80" fill="url(#g94)"/><rect x="290" width="1" height="80" fill="url(#g96)"/><rect x="291" width="1" height="80" fill="url(#g97)"/><rect x="292" width="2" height="80" fill="url(#g93)"/><rect x="294" width="1" height="80" fill="url(#g100)"/><rect x="295" width="2" height="80" fill="url(#g99)"/><rect x="297" width="2" height="80" fill="url(#g95)"/><rect x="299" width="1" height="80" fill="url(#g94)"/><rect x="300" width="2" height="80" fill="url(#g93)"/><rect x="302" width="1" height="80" fill="url(#g100)"/><rect x="303" width="1" height="80" fill="url(#g98)"/></svg>
<div class="abs" style="left:297.4px;top:172.4px;width:305.2px;height:254.8px;border:0.7px solid rgba(20,20,20,0.22);pointer-events:none"></div>
<div class="abs" style="left:295px;top:424.54999999999995px;width:2.4px;height:0.7px;background:#262626;opacity:0.45"></div>
<div class="abs tick" style="left:262.8px;width:30px;text-align:right;top:420.29999999999995px">0</div>
<div class="abs" style="left:295px;top:392.84999999999997px;width:2.4px;height:0.7px;background:#262626;opacity:0.45"></div>
<div class="abs tick" style="left:262.8px;width:30px;text-align:right;top:388.59999999999997px">10</div>
<div class="abs" style="left:295px;top:361.15px;width:2.4px;height:0.7px;background:#262626;opacity:0.45"></div>
<div class="abs tick" style="left:262.8px;width:30px;text-align:right;top:356.9px">20</div>
<div class="abs" style="left:295px;top:329.44999999999993px;width:2.4px;height:0.7px;background:#262626;opacity:0.45"></div>
<div class="abs tick" style="left:262.8px;width:30px;text-align:right;top:325.19999999999993px">30</div>
<div class="abs" style="left:295px;top:297.74999999999994px;width:2.4px;height:0.7px;background:#262626;opacity:0.45"></div>
<div class="abs tick" style="left:262.8px;width:30px;text-align:right;top:293.49999999999994px">40</div>
<div class="abs" style="left:295px;top:266.04999999999995px;width:2.4px;height:0.7px;background:#262626;opacity:0.45"></div>
<div class="abs tick" style="left:262.8px;width:30px;text-align:right;top:261.79999999999995px">50</div>
<div class="abs" style="left:295px;top:234.35px;width:2.4px;height:0.7px;background:#262626;opacity:0.45"></div>
<div class="abs tick" style="left:262.8px;width:30px;text-align:right;top:230.1px">60</div>
<div class="abs" style="left:295px;top:202.64999999999998px;width:2.4px;height:0.7px;background:#262626;opacity:0.45"></div>
<div class="abs tick" style="left:262.8px;width:30px;text-align:right;top:198.39999999999998px">70</div>
<div class="abs" style="left:297.7px;top:427.1px;width:0.7px;height:2.4px;background:#262626;opacity:0.45"></div>
<div class="abs tick" style="left:278.05px;width:40px;text-align:center;top:430.3px">0</div>
<div class="abs" style="left:348.365px;top:427.1px;width:0.7px;height:2.4px;background:#262626;opacity:0.45"></div>
<div class="abs tick" style="left:328.71500000000003px;width:40px;text-align:center;top:430.3px">500</div>
<div class="abs" style="left:399.03px;top:427.1px;width:0.7px;height:2.4px;background:#262626;opacity:0.45"></div>
<div class="abs tick" style="left:379.38px;width:40px;text-align:center;top:430.3px">1000</div>
<div class="abs" style="left:449.695px;top:427.1px;width:0.7px;height:2.4px;background:#262626;opacity:0.45"></div>
<div class="abs tick" style="left:430.045px;width:40px;text-align:center;top:430.3px">1500</div>
<div class="abs" style="left:500.36px;top:427.1px;width:0.7px;height:2.4px;background:#262626;opacity:0.45"></div>
<div class="abs tick" style="left:480.71000000000004px;width:40px;text-align:center;top:430.3px">2000</div>
<div class="abs" style="left:551.025px;top:427.1px;width:0.7px;height:2.4px;background:#262626;opacity:0.45"></div>
<div class="abs tick" style="left:531.375px;width:40px;text-align:center;top:430.3px">2500</div>
<div class="abs tick" style="left:400.0px;width:100px;text-align:center;top:439.8px;letter-spacing:0.15px">Frames</div>
<div class="abs tick" style="left:228px;width:100px;text-align:center;top:295.3px;transform:rotate(-90deg);letter-spacing:0.12px">Channels</div>
<svg class="abs" style="left:663.5px;top:173px" width="304.5" height="253.7" viewBox="0 0 304.5 253.7"><defs><linearGradient id="tb" x1="0" x2="1" y1="0" y2="0"><stop offset="0" stop-color="#fbd24a"/><stop offset="0.05" stop-color="#fbb61a"/><stop offset="0.12" stop-color="#f89a1c"/><stop offset="0.18" stop-color="#f48820"/><stop offset="0.2" stop-color="#e8582f"/><stop offset="0.35" stop-color="#e5532f"/><stop offset="0.47" stop-color="#ea622b"/><stop offset="0.55" stop-color="#f07624"/><stop offset="0.75" stop-color="#f27c20"/><stop offset="0.93" stop-color="#f07a22"/><stop offset="0.97" stop-color="#e06035"/><stop offset="1" stop-color="#cf4446"/></linearGradient><linearGradient id="p1" x1="0" x2="1"><stop offset="0" stop-color="#1a0b3c"/><stop offset="0.08" stop-color="#3b0f70"/><stop offset="0.2" stop-color="#2c0c5a"/><stop offset="0.4" stop-color="#1c0a42"/><stop offset="0.75" stop-color="#180a3c"/><stop offset="1" stop-color="#231052"/></linearGradient><linearGradient id="p2" x1="0" x2="1"><stop offset="0" stop-color="#2a0e5a"/><stop offset="0.12" stop-color="#1f0b48"/><stop offset="0.3" stop-color="#0e0626"/><stop offset="0.7" stop-color="#0f0728"/><stop offset="0.8" stop-color="#1b0a40"/><stop offset="1" stop-color="#1d0c45"/></linearGradient><linearGradient id="dg" gradientUnits="userSpaceOnUse" x1="0" y1="254" x2="0" y2="0"><stop offset="0" stop-color="#f8f0c8"/><stop offset="0.25" stop-color="#f0dcc0"/><stop offset="0.5" stop-color="#ecd8c8"/><stop offset="0.75" stop-color="#e8c8a0"/><stop offset="1" stop-color="#f0d070"/></linearGradient></defs><rect width="304.5" height="253.7" fill="#000003"/><rect x="19" y="5.900000000000006" width="285.5" height="247.79999999999998" fill="#010006"/><rect x="19" y="0" width="285.5" height="6.3" fill="url(#tb)"/><rect x="86.2" y="0" width="1.9" height="6.30" fill="#ffe680" opacity="0.20"/><rect x="195.8" y="0" width="2.3" height="6.30" fill="#ffe680" opacity="0.11"/><rect x="92.3" y="0" width="1.7" height="6.30" fill="#7a1a10" opacity="0.14"/><rect x="255.3" y="0" width="1.2" height="6.30" fill="#7a1a10" opacity="0.19"/><rect x="198.3" y="0" width="2.1" height="6.30" fill="#7a1a10" opacity="0.26"/><rect x="208.7" y="0" width="1.9" height="6.30" fill="#7a1a10" opacity="0.11"/><rect x="104.1" y="0" width="1.7" height="6.30" fill="#7a1a10" opacity="0.11"/><rect x="222.1" y="0" width="2.4" height="6.30" fill="#7a1a10" opacity="0.26"/><rect x="130.6" y="0" width="2.4" height="6.30" fill="#ffe680" opacity="0.24"/><rect x="267.3" y="0" width="1.3" height="6.30" fill="#ffe680" opacity="0.12"/><rect x="291.7" y="0" width="1.5" height="6.30" fill="#7a1a10" opacity="0.18"/><rect x="162.3" y="0" width="1.9" height="6.30" fill="#ffe680" opacity="0.17"/><rect x="184.1" y="0" width="2.4" height="6.30" fill="#7a1a10" opacity="0.26"/><rect x="260.9" y="0" width="1.2" height="6.30" fill="#7a1a10" opacity="0.28"/><rect x="262.1" y="0" width="1.9" height="6.30" fill="#7a1a10" opacity="0.27"/><rect x="220.7" y="0" width="1.9" height="6.30" fill="#7a1a10" opacity="0.14"/><rect x="99.5" y="0" width="2.5" height="6.30" fill="#7a1a10" opacity="0.11"/><rect x="44.0" y="0" width="1.2" height="6.30" fill="#ffe680" opacity="0.24"/><rect x="102.0" y="0" width="1.1" height="6.30" fill="#7a1a10" opacity="0.24"/><rect x="192.6" y="0" width="1.5" height="6.30" fill="#7a1a10" opacity="0.11"/><rect x="267.9" y="0" width="2.5" height="6.30" fill="#7a1a10" opacity="0.28"/><rect x="106.5" y="0" width="1.0" height="6.30" fill="#7a1a10" opacity="0.11"/><rect x="74.8" y="0" width="1.2" height="6.30" fill="#7a1a10" opacity="0.17"/><rect x="31.0" y="0" width="2.4" height="6.30" fill="#ffe680" opacity="0.26"/><rect x="272.3" y="0" width="1.8" height="6.30" fill="#ffe680" opacity="0.17"/><rect x="200.9" y="0" width="1.9" height="6.30" fill="#7a1a10" opacity="0.21"/><rect x="284.7" y="0" width="2.1" height="6.30" fill="#ffe680" opacity="0.19"/><rect x="86.1" y="0" width="1.8" height="6.30" fill="#7a1a10" opacity="0.15"/><rect x="173.9" y="0" width="1.9" height="6.30" fill="#ffe680" opacity="0.10"/><rect x="24.7" y="0" width="1.1" height="6.30" fill="#7a1a10" opacity="0.21"/><rect x="196.2" y="0" width="1.5" height="6.30" fill="#7a1a10" opacity="0.18"/><rect x="218.7" y="0" width="1.1" height="6.30" fill="#ffe680" opacity="0.23"/><rect x="210.0" y="0" width="1.7" height="6.30" fill="#ffe680" opacity="0.27"/><rect x="186.4" y="0" width="1.5" height="6.30" fill="#ffe680" opacity="0.16"/><rect x="123.3" y="0" width="1.6" height="6.30" fill="#ffe680" opacity="0.21"/><rect x="237.2" y="0" width="2.1" height="6.30" fill="#7a1a10" opacity="0.10"/><rect x="106.6" y="0" width="1.4" height="6.30" fill="#7a1a10" opacity="0.14"/><rect x="71.9" y="0" width="1.2" height="6.30" fill="#7a1a10" opacity="0.18"/><rect x="110.0" y="0" width="1.7" height="6.30" fill="#7a1a10" opacity="0.16"/><rect x="260.7" y="0" width="2.0" height="6.30" fill="#ffe680" opacity="0.13"/><rect x="269.0" y="0" width="1.2" height="6.30" fill="#ffe680" opacity="0.18"/><rect x="168.6" y="0" width="2.3" height="6.30" fill="#7a1a10" opacity="0.13"/><rect x="70.9" y="0" width="2.0" height="6.30" fill="#7a1a10" opacity="0.15"/><rect x="246.8" y="0" width="1.4" height="6.30" fill="#ffe680" opacity="0.16"/><rect x="243.3" y="0" width="1.6" height="6.30" fill="#ffe680" opacity="0.15"/><rect x="137.6" y="0" width="1.2" height="6.30" fill="#7a1a10" opacity="0.17"/><rect x="20.3" y="0" width="2.5" height="6.30" fill="#7a1a10" opacity="0.27"/><rect x="141.7" y="0" width="1.3" height="6.30" fill="#7a1a10" opacity="0.27"/><rect x="229.6" y="0" width="1.8" height="6.30" fill="#7a1a10" opacity="0.25"/><rect x="100.7" y="0" width="1.1" height="6.30" fill="#ffe680" opacity="0.16"/><rect x="185.3" y="0" width="1.1" height="6.30" fill="#7a1a10" opacity="0.15"/><rect x="274.3" y="0" width="2.3" height="6.30" fill="#7a1a10" opacity="0.22"/><rect x="273.2" y="0" width="2.1" height="6.30" fill="#ffe680" opacity="0.20"/><rect x="67.5" y="0" width="1.8" height="6.30" fill="#7a1a10" opacity="0.15"/><rect x="135.9" y="0" width="1.5" height="6.30" fill="#7a1a10" opacity="0.27"/><rect x="90.3" y="0" width="2.2" height="6.30" fill="#ffe680" opacity="0.26"/><rect x="118.4" y="0" width="2.2" height="6.30" fill="#7a1a10" opacity="0.14"/><rect x="67.4" y="0" width="2.2" height="6.30" fill="#7a1a10" opacity="0.24"/><rect x="251.6" y="0" width="2.3" height="6.30" fill="#7a1a10" opacity="0.10"/><rect x="33.1" y="0" width="1.8" height="6.30" fill="#ffe680" opacity="0.15"/><rect x="35" y="64.90" width="269.5" height="5.90" fill="#060216"/><rect x="70" y="70.80" width="234.5" height="5.90" fill="#03010e"/><rect x="42" y="76.70" width="262.5" height="5.90" fill="url(#p1)"/><rect x="29" y="82.60" width="275.5" height="5.90" fill="url(#p2)"/><rect x="20" y="5.90" width="30" height="5.90" fill="#0a0424"/><rect x="60" y="123.90" width="244.5" height="5.90" fill="#02010a"/><rect x="90" y="141.60" width="214.5" height="5.90" fill="#04020f"/><rect x="70" y="147.50" width="234.5" height="5.90" fill="#03010c"/><rect x="200" y="159.30" width="104.5" height="5.90" fill="#050214"/><rect x="230" y="165.20" width="74.5" height="5.90" fill="#03010e"/><path d="M0.3 241.7 L2.2 213.7 L6 163.7 L10 113.69999999999999 L13.5 68.69999999999999 L16 38.69999999999999 L17.6 17.69999999999999 L19.2 1.6999999999999886" fill="none" stroke="#3a1160" stroke-width="1.6" opacity="0.45"/><path d="M0.3 241.7 L2.2 213.7 L6 163.7 L10 113.69999999999999 L13.5 68.69999999999999 L16 38.69999999999999 L17.6 17.69999999999999 L19.2 1.6999999999999886" fill="none" stroke="url(#dg)" stroke-width="0.75"/><path d="M0.3 241.7 L2.2 213.7 L6 163.7 L10 113.69999999999999 L13.5 68.69999999999999 L16 38.69999999999999 L17.6 17.69999999999999 L19.2 1.6999999999999886" fill="none" stroke="#4a2068" stroke-width="0.9" stroke-dasharray="7 19" stroke-dashoffset="-12" opacity="0.5"/></svg>
<div class="abs" style="left:662.9px;top:172.4px;width:305.7px;height:254.89999999999998px;border:0.7px solid rgba(20,20,20,0.22);pointer-events:none"></div>
<div class="abs" style="left:660.5px;top:423.45px;width:2.4px;height:0.7px;background:#262626;opacity:0.45"></div>
<div class="abs tick" style="left:628.3px;width:30px;text-align:right;top:419.2px">0</div>
<div class="abs" style="left:660.5px;top:393.84999999999997px;width:2.4px;height:0.7px;background:#262626;opacity:0.45"></div>
<div class="abs tick" style="left:628.3px;width:30px;text-align:right;top:389.59999999999997px">5</div>
<div class="abs" style="left:660.5px;top:364.25px;width:2.4px;height:0.7px;background:#262626;opacity:0.45"></div>
<div class="abs tick" style="left:628.3px;width:30px;text-align:right;top:360.0px">10</div>
<div class="abs" style="left:660.5px;top:334.65px;width:2.4px;height:0.7px;background:#262626;opacity:0.45"></div>
<div class="abs tick" style="left:628.3px;width:30px;text-align:right;top:330.4px">15</div>
<div class="abs" style="left:660.5px;top:305.04999999999995px;width:2.4px;height:0.7px;background:#262626;opacity:0.45"></div>
<div class="abs tick" style="left:628.3px;width:30px;text-align:right;top:300.79999999999995px">20</div>
<div class="abs" style="left:660.5px;top:275.45px;width:2.4px;height:0.7px;background:#262626;opacity:0.45"></div>
<div class="abs tick" style="left:628.3px;width:30px;text-align:right;top:271.2px">25</div>
<div class="abs" style="left:660.5px;top:245.85000000000002px;width:2.4px;height:0.7px;background:#262626;opacity:0.45"></div>
<div class="abs tick" style="left:628.3px;width:30px;text-align:right;top:241.60000000000002px">30</div>
<div class="abs" style="left:660.5px;top:216.25000000000003px;width:2.4px;height:0.7px;background:#262626;opacity:0.45"></div>
<div class="abs tick" style="left:628.3px;width:30px;text-align:right;top:212.00000000000003px">35</div>
<div class="abs" style="left:660.5px;top:186.65px;width:2.4px;height:0.7px;background:#262626;opacity:0.45"></div>
<div class="abs tick" style="left:628.3px;width:30px;text-align:right;top:182.4px">40</div>
<div class="abs" style="left:663.25px;top:427.2px;width:0.7px;height:2.4px;background:#262626;opacity:0.45"></div>
<div class="abs tick" style="left:643.6px;width:40px;text-align:center;top:430.4px">0</div>
<div class="abs" style="left:713.95px;top:427.2px;width:0.7px;height:2.4px;background:#262626;opacity:0.45"></div>
<div class="abs tick" style="left:694.3000000000001px;width:40px;text-align:center;top:430.4px">500</div>
<div class="abs" style="left:764.65px;top:427.2px;width:0.7px;height:2.4px;background:#262626;opacity:0.45"></div>
<div class="abs tick" style="left:745.0px;width:40px;text-align:center;top:430.4px">1000</div>
<div class="abs" style="left:815.35px;top:427.2px;width:0.7px;height:2.4px;background:#262626;opacity:0.45"></div>
<div class="abs tick" style="left:795.7px;width:40px;text-align:center;top:430.4px">1500</div>
<div class="abs" style="left:866.0500000000001px;top:427.2px;width:0.7px;height:2.4px;background:#262626;opacity:0.45"></div>
<div class="abs tick" style="left:846.4000000000001px;width:40px;text-align:center;top:430.4px">2000</div>
<div class="abs" style="left:916.75px;top:427.2px;width:0.7px;height:2.4px;background:#262626;opacity:0.45"></div>
<div class="abs tick" style="left:897.1px;width:40px;text-align:center;top:430.4px">2500</div>
<div class="abs tick" style="left:765.75px;width:100px;text-align:center;top:439.9px;letter-spacing:0.33px">Decoder timestep</div>
<div class="abs tick" style="left:593px;width:100px;text-align:center;top:295.35px;transform:rotate(-90deg);letter-spacing:0.33px">Encoder timestep</div>
<svg class="abs" style="left:480.5px;top:429.9px" width="9" height="14" viewBox="0 0 9 14"><path d="M0.6 0.8V11L3 8.8L4.8 13L6.4 12.3L4.7 8.3H8Z" fill="#fff" stroke="#3c3c3c" stroke-width="0.75"/></svg>
<div id="taskbar"></div>
<div class="abs" style="left:66px;top:693px;width:30.5px;height:27px;background:#343434"></div>
<div class="abs" style="left:36px;top:718.3px;width:27px;height:1.7px;background:#c3a6f2"></div>
<div class="abs" style="left:66px;top:718.3px;width:30.5px;height:1.7px;background:#c3a6f2"></div>
<div class="abs" style="left:102px;top:718.3px;width:27px;height:1.7px;background:#c3a6f2"></div>
<div class="abs" style="left:134px;top:718.3px;width:27px;height:1.7px;background:#c3a6f2"></div>
<div class="abs" style="left:200px;top:718.3px;width:27px;height:1.7px;background:#c3a6f2"></div>
<div class="abs" style="left:559px;top:718.3px;width:27px;height:1.7px;background:#c3a6f2"></div>
<div class="abs" style="left:592px;top:718.3px;width:27px;height:1.7px;background:#c3a6f2"></div>
<svg class="abs" style="left:10.0px;top:700.25px" width="12.0" height="12.5" viewBox="0 0 12 12.5"><g fill="#fff"><path d="M0 1.8L5.2 1V5.8H0Z"/><path d="M6 0.9L12 0V5.8H6Z"/><path d="M0 6.6H5.200V11.400L0 10.600Z"/><path d="M6 6.600H12V12.400L6 11.500Z"/></g></svg>
<svg class="abs" style="left:42.0px;top:700.0px" width="15.0" height="13.0" viewBox="0 0 15 13"><path d="M0 1.4Q0 0.6 0.8 0.6H5L6.4 2H14.200Q15 2 15 2.800V12H0Z" fill="#e9b532"/><rect x="0" y="3.4" width="15" height="8.8" fill="#f8d96b"/><rect x="3.4" y="8" width="8.2" height="3.2" fill="#3b8fd6"/><rect x="5.400" y="10" width="4.200" height="3" fill="#101010"/></svg>
<svg class="abs" style="left:75.0px;top:699.0px" width="15.0" height="15.0" viewBox="0 0 15 15"><circle cx="7.5" cy="7.5" r="7.3" fill="#db4437"/><path d="M7.5 7.5L1.2 3.800A7.300 7.300 0 0 0 4.600 14.200Z" fill="#0f9d58"/><path d="M7.500 7.500L4.600 14.200A7.300 7.300 0 0 0 14.800 7.500Z" fill="#ffcd40"/><path d="M7.500 7.500H14.800A7.300 7.300 0 0 0 13.800 3.800Z" fill="#ffcd40"/><circle cx="7.5" cy="7.5" r="3.4" fill="#f1f1f1"/><circle cx="7.5" cy="7.5" r="2.700" fill="#4285f4"/></svg>
<svg class="abs" style="left:110.0px;top:700.0px" width="10.0" height="13.0" viewBox="0 0 10 13"><path d="M0 0H7.500L10 2.500V13H0Z" fill="#f4f4f4"/><path d="M7.500 0V2.500H10Z" fill="#cfcfcf"/></svg>
<svg class="abs" style="left:141.0px;top:699.5px" width="14.0" height="14.0" viewBox="0 0 14 14"><rect x="0" y="0" width="13.500" height="12" rx="2.500" fill="#7b8ad6"/><path d="M10 11.500L13.400 14V8Z" fill="#7b8ad6"/><path d="M3 4.200Q6.800 2.600 10.600 4.200L11.400 8.600Q6.800 10.400 2.200 8.600Z" fill="#f4f5fb"/><circle cx="5.200" cy="6.600" r="1" fill="#7b8ad6"/><circle cx="8.400" cy="6.600" r="1" fill="#7b8ad6"/></svg>
<svg class="abs" style="left:173.5px;top:699.5px" width="14.0" height="14.0" viewBox="0 0 14 14"><circle cx="7" cy="7" r="6.800" fill="#1a3d66"/><circle cx="9.200" cy="5.200" r="2.600" fill="none" stroke="#eef2f7" stroke-width="1.200"/><path d="M0.400 7.200L5.800 9.600" stroke="#eef2f7" stroke-width="2.200"/><circle cx="5.600" cy="9.800" r="2" fill="#eef2f7"/></svg>
<svg class="abs" style="left:208.0px;top:699.0px" width="11.0" height="15.0" viewBox="0 0 11 15"><path d="M5.500 0C5.500 0 0.300 6.500 0.300 9.500A5.200 5.200 0 0 0 10.700 9.500C10.700 6.500 5.500 0 5.500 0Z" fill="#6f93cc"/><path d="M5.500 3C5.500 3 2 7.500 2.200 9.800A3.300 3.300 0 0 0 5.500 12.800Z" fill="#b5cdee" opacity="0.850"/><ellipse cx="7" cy="10" rx="2.200" ry="2.600" fill="#2c4a80"/></svg>
<div class="abs" style="left:238.3px;top:699.2px;width:15.2px;height:15px;background:#fff;color:#000;font-family:'Liberation Serif',serif;font-weight:bold;font-style:italic;font-size:15px;line-height:15px;text-align:center">G</div>
<svg class="abs" style="left:271.0px;top:698.5px" width="16.0" height="16.0" viewBox="0 0 16 16"><rect width="16" height="16" rx="1.500" fill="#4a4a4a"/><path d="M4.300 4.200L11.700 2.200V5.400L4.300 7.400Z" fill="#ff9800"/><path d="M4.300 7.400L11.700 9.400V12.600L4.300 10.600Z" fill="#f57c00" opacity="0.900"/><path d="M11.700 9.400V12.600L4.300 14.400V11.200Z" fill="#ff9800"/></svg>
<div class="abs" style="left:304.5px;top:700px;width:13.5px;height:13px;background:#0a1a33;border:1.2px solid #35a7f5;border-radius:1.5px;color:#35a7f5;font-size:8.5px;line-height:10.5px;text-align:center;font-weight:bold">Ps</div>
<div class="abs" style="left:337px;top:700px;width:13.500px;height:13px;background:#1c0830;border:1.2px solid #d18bf5;border-radius:1.5px;color:#d18bf5;font-size:8.5px;line-height:10.5px;text-align:center;font-weight:bold">Pr</div>
<svg class="abs" style="left:368.45px;top:697.95px" width="16.5" height="16.5" viewBox="0 0 15 15"><circle cx="7.500" cy="7.500" r="7.400" fill="#1ed760"/><path d="M3.200 5.200Q7.500 3.800 11.800 5.800" stroke="#101010" stroke-width="1.500" fill="none"/><path d="M3.600 7.700Q7.500 6.500 11 8.200" stroke="#101010" stroke-width="1.300" fill="none"/><path d="M4 10Q7.500 9 10.200 10.400" stroke="#101010" stroke-width="1.100" fill="none"/></svg>
<svg class="abs" style="left:401.5px;top:699.0px" width="16.0" height="15.0" viewBox="0 0 16 15"><ellipse cx="8" cy="5.500" rx="7.500" ry="4.800" fill="#e7d9dd" stroke="#c04a52" stroke-width="1.300" transform="rotate(-18 8 5.500)"/><path d="M5 5L11 12M11 5L6.500 12" stroke="#3d7ad6" stroke-width="1.300"/><circle cx="11.400" cy="12.600" r="1.300" fill="none" stroke="#3d7ad6" stroke-width="0.900"/><circle cx="6" cy="12.600" r="1.300" fill="none" stroke="#3d7ad6" stroke-width="0.900"/></svg>
<svg class="abs" style="left:434.0px;top:699.0px" width="15.0" height="15.0" viewBox="0 0 15 15"><path d="M7.500 0L15 3.200L7.500 6.600L0 3.200Z" fill="#6cae4a"/><path d="M0 3.200L7.500 6.600V15L0 11.400Z" fill="#8a6446"/><path d="M15 3.200L7.500 6.600V15L15 11.400Z" fill="#6e4e36"/><path d="M0 3.200L7.500 6.600L15 3.200V5L7.500 8.400L0 5Z" fill="#4f8f38"/></svg>
<svg class="abs" style="left:467.0px;top:699.5px" width="15.0" height="14.0" viewBox="0 0 15 14"><path d="M0 8.500L4 6.500L6.800 9.800L3.800 11.200Z" fill="#3a78c2"/><path d="M4 6.500C6.500 4 7.500 0.800 9.500 0.400C11 0.400 12.500 6 15 12.500L11.500 10L8.800 13.800L6.800 9.800Z" fill="#e2552a"/><path d="M9.500 0.400C11 0.400 12.500 6 15 12.500L11.500 10C10.500 6 10 2 9.500 0.400Z" fill="#a8261a"/><path d="M6.800 9.800L8.800 13.800L11.500 10Z" fill="#f0a13a"/></svg>
<div class="abs" style="left:500px;top:699.5px;width:14.5px;height:14.5px;border-radius:7.5px;background:#e9e9e9;color:#444;font-size:5.6px;line-height:14.5px;text-align:center;font-weight:bold;letter-spacing:-0.2px">EAC</div>
<svg class="abs" style="left:534.0px;top:703.0px" width="12.0" height="9.0" viewBox="0 0 12 9"><ellipse cx="6" cy="4.500" rx="6" ry="4.500" fill="#f8d4c4"/><circle cx="3.800" cy="4" r="0.700" fill="#d4606a"/><circle cx="8.200" cy="4" r="0.700" fill="#d4606a"/><ellipse cx="6" cy="6.200" rx="1.500" ry="0.900" fill="#e88a90"/></svg>
<svg class="abs" style="left:565.0px;top:698.2px" width="16.0" height="16.0" viewBox="0 0 16 16"><rect x="7" y="0" width="8.500" height="5.600" fill="#fff"/><path d="M8.600 5.400L7.200 7.600L10.800 5.400Z" fill="#fff"/><rect x="1.300" y="3.800" width="6.400" height="8.400" rx="3" fill="#f2f2f2"/><path d="M0.500 9.400A4 4 0 0 0 8.500 9.400" stroke="#e4e4e4" stroke-width="1" fill="none"/><path d="M4.500 13.400V15.600M2.300 15.700H6.700" stroke="#e4e4e4" stroke-width="1.100"/></svg>
<svg class="abs" style="left:598.0px;top:699.0px" width="15.0" height="15.0" viewBox="0 0 15 15"><circle cx="7.500" cy="7.500" r="7" fill="#1d1d1d" stroke="#a8a8a8" stroke-width="1"/><path d="M7.500 7.500C7 5 7.500 3 9.500 1.400M7.500 7.500C9.800 7 12 8 13.600 10M7.500 7.500C6.500 9.800 4.500 11.200 2 11.400" fill="none" stroke="#b8b8b8" stroke-width="1.200"/></svg>
<svg class="abs" style="left:1126px;top:704px" width="9" height="5" viewBox="0 0 9 5"><path d="M0.500 4.600L4.500 0.700L8.500 4.600" fill="none" stroke="#f1f1f1" stroke-width="1"/></svg>
<svg class="abs" style="left:1141px;top:701.5px" width="11" height="10" viewBox="0 0 11 10"><g fill="#f4f4f4"><path d="M2.750 0L5.500 1.800L2.750 3.600L0 1.800Z"/><path d="M8.250 0L11 1.800L8.250 3.600L5.500 1.800Z"/><path d="M2.750 3.600L5.500 5.400L2.750 7.200L0 5.400Z"/><path d="M8.250 3.600L11 5.400L8.250 7.200L5.500 5.400Z"/><path d="M2.750 7.800L5.500 6L8.250 7.800L5.500 9.600Z"/></g></svg>
<svg class="abs" style="left:1158px;top:700.5px" width="8" height="12" viewBox="0 0 8 12"><rect x="1.600" y="0" width="4.800" height="8" rx="2.400" fill="#f4f4f4"/><path d="M0.400 6.500A3.600 3.600 0 0 0 7.600 6.500" stroke="#f4f4f4" stroke-width="0.900" fill="none"/><path d="M4 10V11.500" stroke="#f4f4f4" stroke-width="1"/></svg>
<svg class="abs" style="left:1172px;top:702px" width="12" height="10" viewBox="0 0 12 10"><rect x="2.600" y="0.600" width="8.800" height="6" fill="none" stroke="#f4f4f4" stroke-width="1.100"/><rect x="0.300" y="0" width="2.800" height="3.400" fill="#f4f4f4"/><rect x="4.600" y="7" width="4.800" height="2.600" fill="#f4f4f4"/></svg>
<svg class="abs" style="left:1188px;top:702px" width="12" height="10" viewBox="0 0 12 10"><path d="M0.500 3.400H2.600L5.200 1V9L2.600 6.600H0.500Z" fill="none" stroke="#f4f4f4" stroke-width="0.900"/><path d="M6.600 3.400Q7.800 5 6.600 6.600M8.200 2.200Q10 5 8.200 7.800M9.800 1Q12.400 5 9.800 9" fill="none" stroke="#f4f4f4" stroke-width="0.800"/></svg>
<div class="abs" style="left:1196px;top:695.5px;width:56px;text-align:center;font-size:7.6px;line-height:9px;color:#fff">1:01 AM</div>
<div class="abs" style="left:1196px;top:707.5px;width:56px;text-align:center;font-size:7.6px;line-height:9px;color:#fff">3/8/2020</div>
<svg class="abs" style="left:1253px;top:701px" width="12" height="11" viewBox="0 0 12 11"><path d="M0 0H11V8H4.500L2 10.500V8H0Z" fill="#f4f4f4"/><path d="M2 2.200H9M2 4H9M2 5.800H7" stroke="#101010" stroke-width="0.700"/></svg>
<div class="abs" style="left:1258.5px;top:706.5px;width:9px;height:9px;border-radius:5px;background:#101010;border:0.8px solid #bbb;color:#fff;font-size:6.6px;line-height:7.4px;text-align:center;font-weight:bold">3</div>
<div class="abs" style="left:1276.5px;top:693px;width:1px;height:27px;background:#555"></div>
</body></html>
